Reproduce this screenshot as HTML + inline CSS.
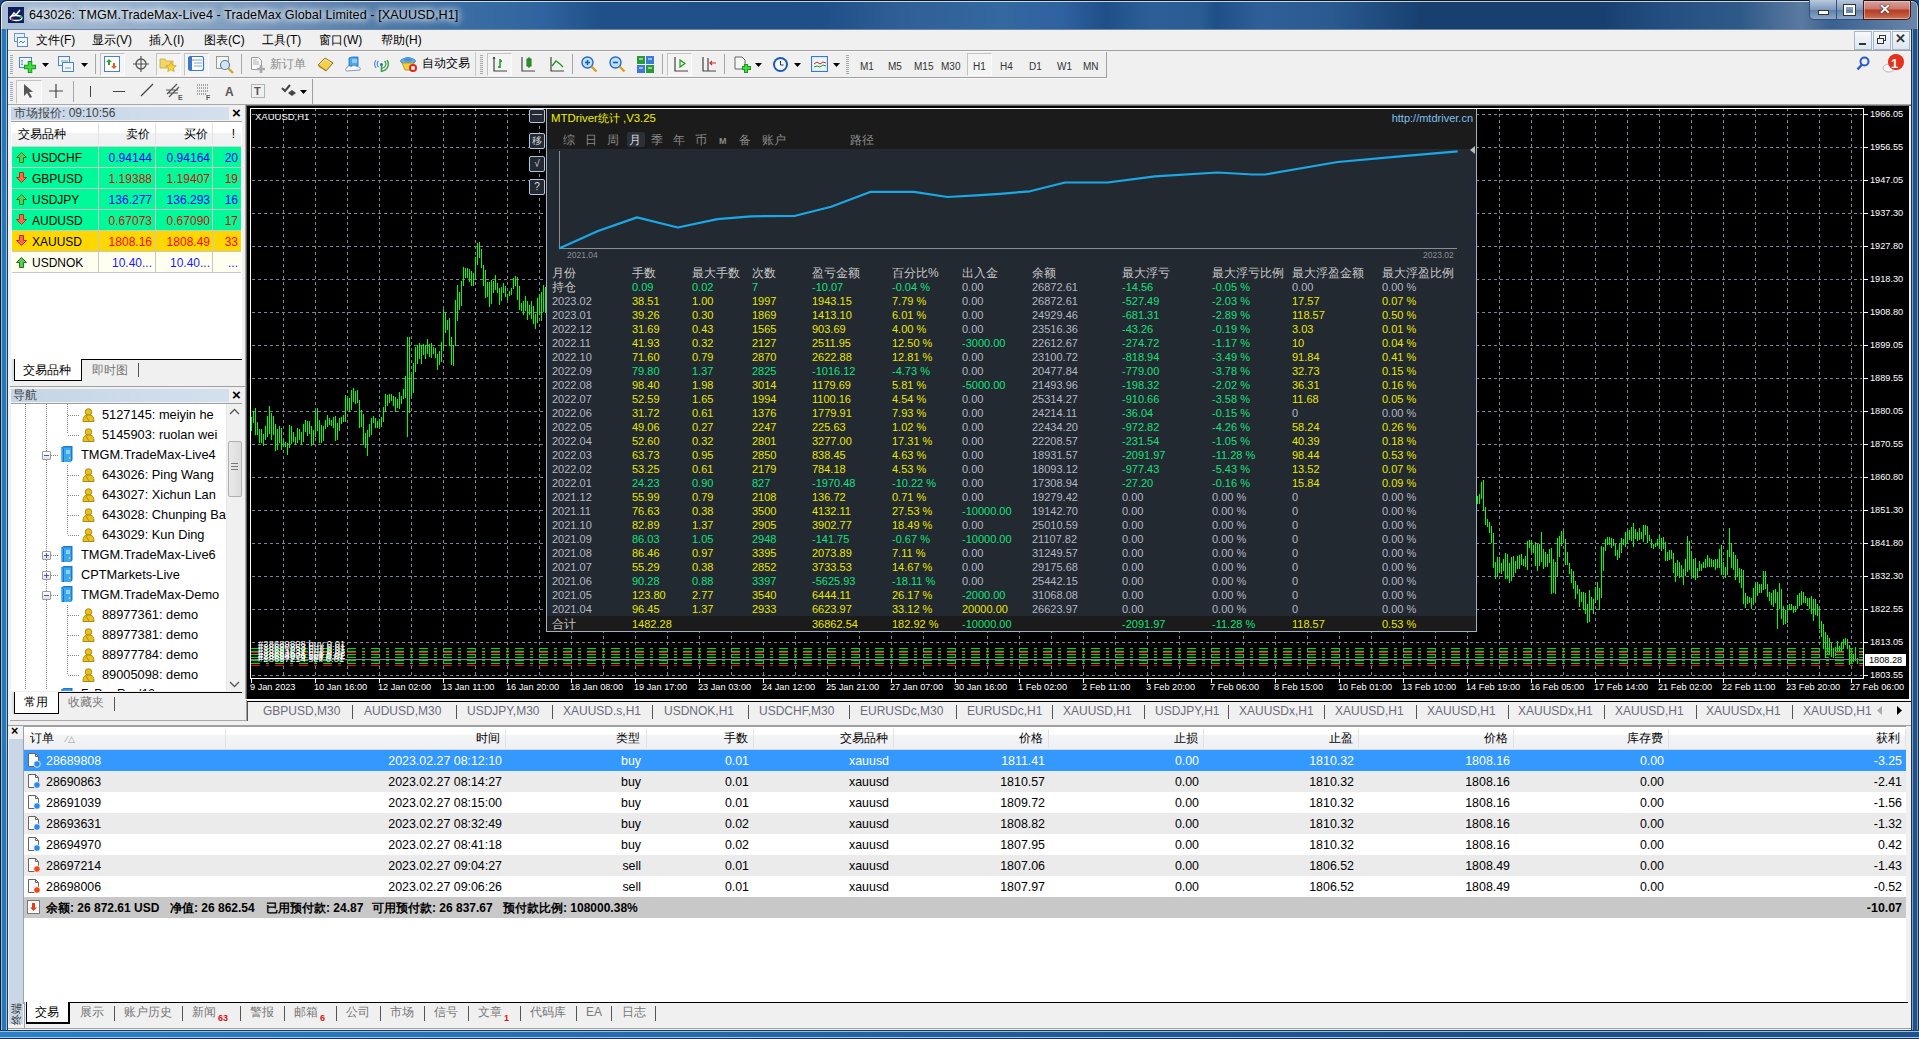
<!DOCTYPE html><html><head><meta charset="utf-8"><style>
html,body{margin:0;padding:0;width:1919px;height:1039px;overflow:hidden;position:relative;font-family:"Liberation Sans",sans-serif;}
div{line-height:16px;white-space:nowrap;}
</style></head><body><div style="position:absolute;left:0px;top:0px;width:1919px;height:1039px;background:linear-gradient(90deg,#3a6ea8 0%,#2f5f96 40%,#2a578c 70%,#3d74ad 100%);"></div><div style="position:absolute;left:0px;top:0px;width:1919px;height:29px;background:linear-gradient(90deg,#a9bdd5 0,#93aecb 150px,#7797bb 260px,#4f7aa8 380px,#2f5f94 500px,#2a5b90 620px,#3a6a9c 680px,#28578c 760px,#2c5d92 900px,#396a9c 1000px,#2a5b90 1100px,#3a6b9e 1220px,#234f84 1300px,#1c467a 1450px,#2a5a8e 1560px,#1d477b 1640px,#2f5d8e 1760px,#44709e 1860px,#3a6592 1919px);"></div><div style="position:absolute;left:0px;top:0px;width:6px;height:6px;background:#1a4f9a;"></div><div style="position:absolute;left:1913px;top:0px;width:6px;height:6px;background:#1a4f9a;"></div><div style="position:absolute;left:0;top:0;width:1917px;height:29px;border:1px solid #0a1a2a;border-bottom:none;border-radius:7px 7px 0 0;box-shadow:inset 1px 1px 0 rgba(255,255,255,.75),inset -1px 0 0 rgba(255,255,255,.6);background:linear-gradient(90deg,#a9bdd5 0,#93aecb 150px,#7797bb 260px,#4f7aa8 380px,#3a6ea4 460px,#2f64a0 540px,#1f5089 600px,#1f4f88 820px,#2f5f96 900px,#3368a0 1000px,#2f62a0 1060px,#1f4f88 1105px,#2c5f98 1150px,#2a5c94 1200px,#1f4f88 1215px,#2f5f98 1260px,#2a5a90 1330px,#17406f 1420px,#17406f 1600px,#244e80 1660px,#2f5a88 1740px,#5a7aa0 1800px,#3a6090 1830px,#6a88aa 1919px);"></div><div style="position:absolute;left:0px;top:29px;width:8px;height:1010px;background:linear-gradient(90deg,#0a1a2a 0 1px,#8ac0e8 1px 2px,#2878b8 2px 6px,#90c0e0 6px 7px,#1a3a5a 7px 8px);"></div><div style="position:absolute;left:1911px;top:29px;width:8px;height:1010px;background:linear-gradient(90deg,#1a3050 0 1px,#80a0c0 1px 2px,#22508a 2px 6px,#7a9ac0 6px 7px,#1a3050 7px 8px);"></div><div style="position:absolute;left:0px;top:1030px;width:1919px;height:9px;background:linear-gradient(180deg,#1a3a5a 0 1px,#90c0e0 1px 2px,transparent 2px 7px,#a0c8e8 7px 8px,#1a3050 8px 9px),linear-gradient(90deg,#2a80c8 0,#2a74b8 400px,#245c98 1000px,#1f4f88 1500px,#22508a 1919px);"></div><div style="position:absolute;left:8px;top:7px;width:16px;height:16px;background:#0c1f5c;"></div><svg style="position:absolute;left:8px;top:7px" width="16" height="16"><ellipse cx="8" cy="11" rx="6" ry="2.5" fill="none" stroke="#fff" stroke-width="1.3"/><path d="M3 10 L6 6 L8 8 L12 3" stroke="#fff" stroke-width="1.5" fill="none"/><circle cx="13" cy="10" r="1.2" fill="#2c2"/><circle cx="4" cy="12" r="1" fill="#e22"/></svg><div style="position:absolute;left:29px;top:7px;font-size:12.6px;color:#000;text-shadow:0 0 6px #fff,0 0 8px #fff,0 0 10px rgba(255,255,255,.8);letter-spacing:0.1px;white-space:nowrap;">643026: TMGM.TradeMax-Live4 - TradeMax Global Limited - [XAUUSD,H1]</div><div style="position:absolute;left:1809px;top:0px;width:27px;height:19px;border:1px solid #34507a;border-top:none;border-radius:0 0 0 5px;background:linear-gradient(180deg,#b9c9dd,#7d99bd 50%,#5e7fa8 51%,#8aa6c8);"></div><div style="position:absolute;left:1818px;top:10px;width:9px;height:3px;background:#fff;border:1px solid #333;"></div><div style="position:absolute;left:1836px;top:0px;width:26px;height:19px;border:1px solid #34507a;border-top:none;background:linear-gradient(180deg,#b9c9dd,#7d99bd 50%,#5e7fa8 51%,#8aa6c8);"></div><div style="position:absolute;left:1844px;top:5px;width:7px;height:6px;border:2px solid #fff;outline:1px solid #333;"></div><div style="position:absolute;left:1863px;top:1px;width:46px;height:18px;border:1px solid #4a1a10;border-top:none;border-radius:0 0 5px 0;box-shadow:inset 0 0 0 1px rgba(255,220,210,.5);background:linear-gradient(180deg,#dda09a 0,#c87870 45%,#b83a20 50%,#c05a40 80%,#c87a60 100%);"></div><div style="position:absolute;left:1879px;top:1px;font-size:14px;color:#fff;font-weight:bold;text-shadow:0 0 1px #000,0 0 2px #333;">✕</div><div style="position:absolute;left:8px;top:29px;width:1903px;height:1001px;background:#f0f0f0;"></div><div style="position:absolute;left:8px;top:29px;width:1903px;height:1px;background:#6d86a6;"></div><svg style="position:absolute;left:13px;top:32px" width="16" height="16"><rect x="1.5" y="1.5" width="10" height="8" fill="#e8f0fa" stroke="#6a9ad0"/><rect x="4.5" y="5.5" width="10" height="9" fill="#f4f8fc" stroke="#5a8ac8"/><path d="M6 11 l2 -2 l2 2 l2 -2" stroke="#4a7abf" fill="none"/></svg><div style="position:absolute;left:36px;top:32px;font-size:12px;color:#000;">文件(F)</div><div style="position:absolute;left:92px;top:32px;font-size:12px;color:#000;">显示(V)</div><div style="position:absolute;left:149px;top:32px;font-size:12px;color:#000;">插入(I)</div><div style="position:absolute;left:204px;top:32px;font-size:12px;color:#000;">图表(C)</div><div style="position:absolute;left:262px;top:32px;font-size:12px;color:#000;">工具(T)</div><div style="position:absolute;left:319px;top:32px;font-size:12px;color:#000;">窗口(W)</div><div style="position:absolute;left:381px;top:32px;font-size:12px;color:#000;">帮助(H)</div><div style="position:absolute;left:1854px;top:31px;width:16px;height:17px;border:1px solid #a8b8cc;background:linear-gradient(#f6f8fb,#dde6f0);"></div><div style="position:absolute;left:1873px;top:31px;width:16px;height:17px;border:1px solid #a8b8cc;background:linear-gradient(#f6f8fb,#dde6f0);"></div><div style="position:absolute;left:1892px;top:31px;width:16px;height:17px;border:1px solid #a8b8cc;background:linear-gradient(#f6f8fb,#dde6f0);"></div><div style="position:absolute;left:1859px;top:43px;width:7px;height:2px;background:#333;"></div><svg style="position:absolute;left:1875px;top:33px" width="14" height="14"><rect x="4.5" y="2.5" width="6" height="5" fill="none" stroke="#333"/><rect x="2.5" y="5.5" width="6" height="5" fill="#eef2f6" stroke="#333"/></svg><div style="position:absolute;left:1895px;top:31px;font-size:13px;color:#333;font-weight:bold;">✕</div><div style="position:absolute;left:8px;top:50px;width:1903px;height:1px;background:#a0a0a0;"></div><div style="position:absolute;left:8px;top:51px;width:1903px;height:1px;background:#fafafa;"></div><div style="position:absolute;left:8px;top:77px;width:1903px;height:1px;background:#a0a0a0;"></div><div style="position:absolute;left:8px;top:78px;width:1903px;height:1px;background:#fafafa;"></div><div style="position:absolute;left:8px;top:104px;width:1903px;height:1px;background:#a8a8a8;"></div><div style="position:absolute;left:246px;top:105px;width:1665px;height:1px;background:#6a6a6a;"></div><div style="position:absolute;left:10px;top:55px;width:3px;height:19px;background:repeating-linear-gradient(180deg,#a8a8a8 0 1px,transparent 1px 2px);"></div><div style="position:absolute;left:10px;top:82px;width:3px;height:19px;background:repeating-linear-gradient(180deg,#a8a8a8 0 1px,transparent 1px 2px);"></div><div style="position:absolute;left:480px;top:55px;width:3px;height:19px;background:repeating-linear-gradient(180deg,#a8a8a8 0 1px,transparent 1px 2px);"></div><div style="position:absolute;left:846px;top:55px;width:3px;height:19px;background:repeating-linear-gradient(180deg,#a8a8a8 0 1px,transparent 1px 2px);"></div><div style="position:absolute;left:475px;top:52px;width:1px;height:24px;background:#c8c8c8;"></div><div style="position:absolute;left:1106px;top:52px;width:1px;height:25px;background:#a0a0a0;"></div><div style="position:absolute;left:312px;top:79px;width:1px;height:25px;background:#a0a0a0;"></div><div style="position:absolute;left:1107px;top:51px;width:804px;height:28px;background:#f0f0f0;"></div><div style="position:absolute;left:313px;top:79px;width:1598px;height:25px;background:#f0f0f0;"></div><svg style="position:absolute;left:19px;top:56px" width="18" height="17" viewBox="0 0 18 17"><rect x="0.5" y="1.5" width="12" height="10" fill="#eef5fc" stroke="#4a84c8"/><path d="M3 4v5M2 5l1-1 1 1M2 8l1 1 1-1" stroke="#6a8ab0" fill="none" stroke-width=".8"/><path d="M11 5v12M5 11h12" stroke="#1a9a1a" stroke-width="4.5"/><path d="M11 6v10M6 11h10" stroke="#3fdc3f" stroke-width="2.5"/></svg><svg style="position:absolute;left:42px;top:63px" width="7" height="4" viewBox="0 0 7 4"><path d="M0 0 H7 L3.5 4 Z" fill="#000"/></svg><svg style="position:absolute;left:58px;top:56px" width="17" height="17" viewBox="0 0 17 17"><rect x="0.5" y="0.5" width="11" height="9" fill="#eef5fc" stroke="#4a84c8"/><rect x="4.5" y="6.5" width="11" height="9" fill="#eef5fc" stroke="#4a84c8"/><path d="M3 5h7M7 12h6" stroke="#6a8ab0" stroke-width=".8"/></svg><svg style="position:absolute;left:81px;top:63px" width="7" height="4" viewBox="0 0 7 4"><path d="M0 0 H7 L3.5 4 Z" fill="#000"/></svg><div style="position:absolute;left:95px;top:54px;width:1px;height:20px;background:#a8a8a8;"></div><div style="position:absolute;left:100px;top:53px;width:23px;height:21px;border:1px solid #c4c4c4;border-right-color:#fbfbfb;border-bottom-color:#fbfbfb;background:#f4f4f4;"></div><svg style="position:absolute;left:104px;top:56px" width="17" height="17" viewBox="0 0 17 17"><rect x="0.5" y="0.5" width="15" height="15" fill="#fff" stroke="#4a84c8"/><path d="M5 3l3 3H6v3H4V6H2z" fill="#2aa52a"/><path d="M10 13l3-3h-2V7H9v3H7z" fill="#e8582a"/></svg><svg style="position:absolute;left:133px;top:56px" width="16" height="16" viewBox="0 0 16 16"><circle cx="8" cy="8" r="5" fill="none" stroke="#555" stroke-width="1.3"/><path d="M8 0v16M0 8h16" stroke="#555" stroke-width="1.2"/></svg><div style="position:absolute;left:156px;top:53px;width:23px;height:21px;border:1px solid #c4c4c4;border-right-color:#fbfbfb;border-bottom-color:#fbfbfb;background:#f4f4f4;"></div><svg style="position:absolute;left:159px;top:55px" width="18" height="18" viewBox="0 0 18 18"><path d="M1 4h5l1 2h7v7H1z" fill="#f2d66a" stroke="#c9a640" stroke-width=".8"/><path d="M12 7l1.6 3.3 3.6.4-2.7 2.4.8 3.5-3.3-1.8-3.3 1.8.8-3.5-2.7-2.4 3.6-.4z" fill="#f5d33b" stroke="#c8a020" stroke-width=".7"/></svg><div style="position:absolute;left:184px;top:53px;width:23px;height:21px;border:1px solid #c4c4c4;border-right-color:#fbfbfb;border-bottom-color:#fbfbfb;background:#f4f4f4;"></div><svg style="position:absolute;left:188px;top:56px" width="17" height="16" viewBox="0 0 17 16"><rect x="0.5" y="0.5" width="15" height="14" rx="2" fill="#fff" stroke="#3a78c8" stroke-width="1.2"/><rect x="1" y="1" width="3" height="13" fill="#3a78c8"/><path d="M6 4h8M6 7h8M6 10h8" stroke="#5a8ad0" stroke-width=".8"/><circle cx="5" cy="4" r=".7" fill="#e22"/></svg><svg style="position:absolute;left:216px;top:56px" width="19" height="18" viewBox="0 0 19 18"><rect x="0.5" y="0.5" width="12" height="12" fill="#f5f5f0" stroke="#9a9a90"/><circle cx="9" cy="9" r="4.5" fill="#cfe6f8" stroke="#5a7aa8" stroke-width="1.2"/><path d="M12 12l5 5" stroke="#d6a020" stroke-width="2.2"/></svg><div style="position:absolute;left:241px;top:54px;width:1px;height:20px;background:#a8a8a8;"></div><svg style="position:absolute;left:250px;top:56px" width="18" height="18" viewBox="0 0 18 18"><path d="M1.5 1.5h7l3 3v9h-10z" fill="#fafafa" stroke="#9a9a9a"/><path d="M3 4h4M3 6h6M3 8h6" stroke="#b0b0b0"/><path d="M11 9v8M7 13h8" stroke="#a8a8a8" stroke-width="2.6"/></svg><div style="position:absolute;left:270px;top:56px;font-size:12px;color:#8a8a8a;">新订单</div><svg style="position:absolute;left:317px;top:57px" width="17" height="15" viewBox="0 0 17 15"><path d="M1 8l7-7 8 5-7 8z" fill="#f2d050" stroke="#8a6010" stroke-width=".9"/><path d="M1 8l1 2 7 4 0-1z" fill="#b07810"/><path d="M3 7l5-5 6 4" fill="none" stroke="#fff2b0" stroke-width=".8"/></svg><svg style="position:absolute;left:345px;top:56px" width="17" height="17" viewBox="0 0 17 17"><path d="M4 2l3-1h6v9H4z" fill="#48a8f0" stroke="#1a6ac0" stroke-width=".8"/><path d="M7 4h5M7 6h5" stroke="#fff" stroke-width=".8"/><path d="M2 15c-2 0-2-3 0-3 0-2 3-3 4-1 1-2 5-2 6 0 2-1 4 1 3 3z" fill="#f4f8fc" stroke="#7a90b0" stroke-width=".9"/></svg><svg style="position:absolute;left:373px;top:56px" width="17" height="17" viewBox="0 0 17 17"><path d="M3 12a7 7 0 0 1 0-8" fill="none" stroke="#5a90d8" stroke-width="1.2"/><path d="M5.5 11a4 4 0 0 1 0-6" fill="none" stroke="#5a90d8" stroke-width="1.2"/><path d="M14 4a7 7 0 0 1-5 11" fill="none" stroke="#3aa04a" stroke-width="1.4"/><path d="M11.5 5a4 4 0 0 1-2.5 7" fill="none" stroke="#3aa04a" stroke-width="1.2"/><circle cx="8.5" cy="8.5" r="1.5" fill="#2a6acc"/><path d="M8.5 9v7" stroke="#3aa04a" stroke-width="1.6"/></svg><svg style="position:absolute;left:400px;top:55px" width="18" height="18" viewBox="0 0 18 18"><ellipse cx="8" cy="6" rx="7.5" ry="3" fill="#68b0e8" stroke="#3a7ab8" stroke-width=".8"/><ellipse cx="8" cy="4.5" rx="4" ry="2.5" fill="#4a98d8"/><path d="M2 8h12l-2 7H5z" fill="#f2d040" stroke="#b08a10" stroke-width=".8"/><circle cx="13" cy="13" r="4" fill="#e0281a"/><rect x="11.3" y="11.3" width="3.4" height="3.4" fill="#fff"/></svg><div style="position:absolute;left:422px;top:55px;font-size:12px;color:#000;">自动交易</div><div style="position:absolute;left:487px;top:53px;width:23px;height:21px;border:1px solid #c4c4c4;border-right-color:#fbfbfb;border-bottom-color:#fbfbfb;background:#f4f4f4;"></div><svg style="position:absolute;left:492px;top:56px" width="16" height="17" viewBox="0 0 16 17"><path d="M2 1v14h13" stroke="#444" fill="none" stroke-width="1.2"/><path d="M1 3l1-2 1 2" stroke="#444" fill="none"/><path d="M8 3v9M6 11h2M8 5h2" stroke="#1a9a1a" stroke-width="1.5" fill="none"/></svg><svg style="position:absolute;left:520px;top:56px" width="16" height="17" viewBox="0 0 16 17"><path d="M2 1v14h13" stroke="#444" fill="none" stroke-width="1.2"/><rect x="7" y="3" width="4" height="7" fill="#2cc02c" stroke="#1a6a1a"/><path d="M9 1v11" stroke="#1a6a1a"/></svg><svg style="position:absolute;left:549px;top:56px" width="16" height="17" viewBox="0 0 16 17"><path d="M2 1v14h13" stroke="#444" fill="none" stroke-width="1.2"/><path d="M3 10l4-5 4 3 3 3" stroke="#1a9a1a" fill="none" stroke-width="1.3"/></svg><div style="position:absolute;left:572px;top:54px;width:1px;height:20px;background:#a8a8a8;"></div><svg style="position:absolute;left:581px;top:56px" width="17" height="17" viewBox="0 0 17 17"><circle cx="6.5" cy="6.5" r="5.5" fill="#bfe0fa" stroke="#2a6ac0" stroke-width="1.4"/><path d="M4 6.5h5M6.5 4v5" stroke="#1a5ab0" stroke-width="1.6"/><path d="M10.5 10.5l5 5" stroke="#d8a020" stroke-width="2.4"/></svg><svg style="position:absolute;left:609px;top:56px" width="17" height="17" viewBox="0 0 17 17"><circle cx="6.5" cy="6.5" r="5.5" fill="#bfe0fa" stroke="#2a6ac0" stroke-width="1.4"/><path d="M4 6.5h5" stroke="#1a5ab0" stroke-width="1.6"/><path d="M10.5 10.5l5 5" stroke="#d8a020" stroke-width="2.4"/></svg><svg style="position:absolute;left:637px;top:56px" width="17" height="17" viewBox="0 0 17 17"><rect x="0" y="0" width="8" height="8" fill="#2a9a3a"/><rect x="9" y="0" width="8" height="8" fill="#3a7ad8"/><rect x="0" y="9" width="8" height="8" fill="#3a7ad8"/><rect x="9" y="9" width="8" height="8" fill="#2a9a3a"/><path d="M2 3h4M11 3h4M2 12h4M11 12h4" stroke="#fff"/></svg><div style="position:absolute;left:662px;top:54px;width:1px;height:20px;background:#a8a8a8;"></div><div style="position:absolute;left:667px;top:53px;width:23px;height:21px;border:1px solid #c4c4c4;border-right-color:#fbfbfb;border-bottom-color:#fbfbfb;background:#f4f4f4;"></div><svg style="position:absolute;left:673px;top:56px" width="16" height="17" viewBox="0 0 16 17"><path d="M2 1v14h13" stroke="#444" fill="none" stroke-width="1.2"/><path d="M7 4v7l5-3.5z" fill="none" stroke="#1a9a1a" stroke-width="1.2"/></svg><svg style="position:absolute;left:701px;top:56px" width="16" height="17" viewBox="0 0 16 17"><path d="M2 1v14h13M7 2v13" stroke="#444" fill="none" stroke-width="1.2"/><path d="M15 7h-6M11 5l-2 2 2 2" stroke="#d02a2a" fill="none" stroke-width="1.2"/></svg><div style="position:absolute;left:724px;top:54px;width:1px;height:20px;background:#a8a8a8;"></div><svg style="position:absolute;left:734px;top:56px" width="18" height="18" viewBox="0 0 18 18"><path d="M1 1h7l3 3v9H1z" fill="#f6f6f6" stroke="#666"/><path d="M12 8v9M8 12h9" stroke="#1a9a1a" stroke-width="4"/><path d="M12 9v7M9 12h7" stroke="#3fdc3f" stroke-width="2"/></svg><svg style="position:absolute;left:755px;top:63px" width="7" height="4" viewBox="0 0 7 4"><path d="M0 0 H7 L3.5 4 Z" fill="#000"/></svg><svg style="position:absolute;left:772px;top:56px" width="17" height="17" viewBox="0 0 17 17"><circle cx="8.5" cy="8.5" r="7.5" fill="#1a5ab8"/><circle cx="8.5" cy="8.5" r="5.5" fill="#f4f8fc"/><path d="M8.5 5v4h3" stroke="#333" fill="none"/></svg><svg style="position:absolute;left:794px;top:63px" width="7" height="4" viewBox="0 0 7 4"><path d="M0 0 H7 L3.5 4 Z" fill="#000"/></svg><svg style="position:absolute;left:811px;top:56px" width="17" height="16" viewBox="0 0 17 16"><rect x="0.5" y="0.5" width="16" height="15" fill="#eaf2fa" stroke="#3a78c8" stroke-width="1.2"/><path d="M3 8l3-2 3 2 3-2 3 1" stroke="#d02a2a" fill="none"/><path d="M3 11l3-1 3 1 3-2 3 1" stroke="#2a9a2a" fill="none"/></svg><svg style="position:absolute;left:833px;top:63px" width="7" height="4" viewBox="0 0 7 4"><path d="M0 0 H7 L3.5 4 Z" fill="#000"/></svg><div style="position:absolute;left:860px;top:59px;font-size:10px;color:#333;">M1</div><div style="position:absolute;left:888px;top:59px;font-size:10px;color:#333;">M5</div><div style="position:absolute;left:914px;top:59px;font-size:10px;color:#333;">M15</div><div style="position:absolute;left:941px;top:59px;font-size:10px;color:#333;">M30</div><div style="position:absolute;left:967px;top:53px;width:23px;height:21px;border:1px solid #c4c4c4;border-right-color:#fbfbfb;border-bottom-color:#fbfbfb;background:#f4f4f4;"></div><div style="position:absolute;left:973px;top:59px;font-size:10px;color:#333;">H1</div><div style="position:absolute;left:1000px;top:59px;font-size:10px;color:#333;">H4</div><div style="position:absolute;left:1029px;top:59px;font-size:10px;color:#333;">D1</div><div style="position:absolute;left:1057px;top:59px;font-size:10px;color:#333;">W1</div><div style="position:absolute;left:1083px;top:59px;font-size:10px;color:#333;">MN</div><svg style="position:absolute;left:1856px;top:56px" width="14" height="16" viewBox="0 0 14 16"><circle cx="8.5" cy="5.5" r="4" fill="none" stroke="#2a5ac8" stroke-width="2"/><path d="M6 8.5l-4.5 5" stroke="#2a5ac8" stroke-width="2.4"/></svg><svg style="position:absolute;left:1880px;top:53px" width="26" height="22" viewBox="0 0 26 22"><ellipse cx="9" cy="15" rx="6" ry="4" fill="#f4f4f4" stroke="#bbb"/><circle cx="16" cy="9" r="8" fill="#e02a1a"/><circle cx="16" cy="9" r="7" fill="#e8321e"/></svg><div style="position:absolute;left:1891px;top:56px;font-size:13px;color:#fff;font-weight:bold;">1</div><div style="position:absolute;left:16px;top:80px;width:24px;height:22px;border:1px solid #c4c4c4;border-right-color:#fbfbfb;border-bottom-color:#fbfbfb;background:#f4f4f4;"></div><svg style="position:absolute;left:23px;top:83px" width="11" height="16" viewBox="0 0 11 16"><path d="M1 1v12l3-3 3 5 2-1-3-5h4z" fill="#555"/></svg><svg style="position:absolute;left:48px;top:83px" width="16" height="16" viewBox="0 0 16 16"><path d="M8 1v14M1 8h14" stroke="#444" stroke-width="1.2"/></svg><div style="position:absolute;left:73px;top:81px;width:1px;height:21px;background:#a8a8a8;"></div><div style="position:absolute;left:90px;top:86px;width:1px;height:11px;background:#444;"></div><div style="position:absolute;left:113px;top:91px;width:12px;height:1px;background:#444;"></div><svg style="position:absolute;left:140px;top:83px" width="14" height="14" viewBox="0 0 14 14"><path d="M1 13L13 1" stroke="#444" stroke-width="1.2"/></svg><svg style="position:absolute;left:166px;top:83px" width="18" height="18" viewBox="0 0 18 18"><path d="M1 11L11 1M3 14L13 4M0 7h12M2 10h10" stroke="#555" stroke-width="1.2"/><text x="12" y="17" font-size="7" font-family="Liberation Sans" fill="#555" font-weight="bold">E</text></svg><svg style="position:absolute;left:196px;top:83px" width="16" height="18" viewBox="0 0 16 18"><path d="M1 2h12M1 5h12M1 8h12M1 11h10" stroke="#555" stroke-dasharray="1 1"/><text x="10" y="17" font-size="7" font-family="Liberation Sans" fill="#555" font-weight="bold">F</text></svg><div style="position:absolute;left:225px;top:84px;font-size:12px;color:#555;font-weight:bold;">A</div><svg style="position:absolute;left:251px;top:83px" width="15" height="16" viewBox="0 0 15 16"><rect x="0.5" y="1.5" width="13" height="13" fill="none" stroke="#777" stroke-dasharray="1 1"/><text x="3" y="12" font-size="11" font-family="Liberation Sans" fill="#555" font-weight="bold">T</text></svg><svg style="position:absolute;left:280px;top:83px" width="18" height="16" viewBox="0 0 18 16"><path d="M2 5l3 3 5-6" stroke="#444" fill="none" stroke-width="2"/><path d="M8 10l4-3 4 3-4 3z" fill="#444"/></svg><svg style="position:absolute;left:300px;top:90px" width="7" height="4" viewBox="0 0 7 4"><path d="M0 0 H7 L3.5 4 Z" fill="#000"/></svg><div style="position:absolute;left:10px;top:106px;width:236px;height:280px;background:#f0f0f0;"></div><div style="position:absolute;left:11px;top:107px;width:218px;height:13px;background:linear-gradient(90deg,#c5d5e6,#d3e0ee);"></div><div style="position:absolute;left:14px;top:105px;font-size:12px;color:#444;">市场报价: 09:10:56</div><div style="position:absolute;left:232px;top:105px;font-size:15px;color:#000;font-weight:bold;">×</div><div style="position:absolute;left:11px;top:121px;width:231px;height:238px;background:#fff;border-top:1px solid #a0a0a0;"></div><div style="position:absolute;left:12px;top:122px;width:229px;height:24px;background:linear-gradient(180deg,#ffffff 0%,#ffffff 45%,#f1f2f4 46%,#eef0f2 100%);border-bottom:1px solid #d0d0d0;"></div><div style="position:absolute;left:98px;top:123px;width:1px;height:21px;background:#e2e2e2;"></div><div style="position:absolute;left:155px;top:123px;width:1px;height:21px;background:#e2e2e2;"></div><div style="position:absolute;left:212px;top:123px;width:1px;height:21px;background:#e2e2e2;"></div><div style="position:absolute;left:18px;top:126px;font-size:12px;color:#000;">交易品种</div><div style="position:absolute;right:1769px;top:126px;font-size:12px;color:#000;text-align:right;">卖价</div><div style="position:absolute;right:1711px;top:126px;font-size:12px;color:#000;text-align:right;">买价</div><div style="position:absolute;right:1684px;top:126px;font-size:12px;color:#000;text-align:right;">!</div><div style="position:absolute;left:12px;top:147px;width:229px;height:20px;background:#00fa9a;"></div><div style="position:absolute;left:12px;top:167px;width:229px;height:1px;background:#c8c8c8;"></div><div style="position:absolute;left:98px;top:147px;width:1px;height:20px;background:#c8c8c8;"></div><div style="position:absolute;left:155px;top:147px;width:1px;height:20px;background:#c8c8c8;"></div><div style="position:absolute;left:212px;top:147px;width:1px;height:20px;background:#c8c8c8;"></div><svg style="position:absolute;left:16px;top:152px" width="11" height="11" viewBox="0 0 11 11"><path d="M5.5 0.5L10.5 5.5H7.5V10.5H3.5V5.5H0.5Z" fill="#5ac85a" stroke="#1a7a1a" stroke-width="1"/></svg><div style="position:absolute;left:32px;top:150px;font-size:12px;color:#000;">USDCHF</div><div style="position:absolute;right:1767px;top:150px;font-size:12px;color:#0000ff;text-align:right;">0.94144</div><div style="position:absolute;right:1709px;top:150px;font-size:12px;color:#0000ff;text-align:right;">0.94164</div><div style="position:absolute;right:1681px;top:150px;font-size:12px;color:#0000ff;text-align:right;">20</div><div style="position:absolute;left:12px;top:168px;width:229px;height:20px;background:#00fa9a;"></div><div style="position:absolute;left:12px;top:188px;width:229px;height:1px;background:#c8c8c8;"></div><div style="position:absolute;left:98px;top:168px;width:1px;height:20px;background:#c8c8c8;"></div><div style="position:absolute;left:155px;top:168px;width:1px;height:20px;background:#c8c8c8;"></div><div style="position:absolute;left:212px;top:168px;width:1px;height:20px;background:#c8c8c8;"></div><svg style="position:absolute;left:16px;top:172px" width="11" height="11" viewBox="0 0 11 11"><path d="M5.5 10.5L10.5 5.5H7.5V0.5H3.5V5.5H0.5Z" fill="#f86a4a" stroke="#c02a10" stroke-width="1"/></svg><div style="position:absolute;left:32px;top:171px;font-size:12px;color:#000;">GBPUSD</div><div style="position:absolute;right:1767px;top:171px;font-size:12px;color:#dd0a0a;text-align:right;">1.19388</div><div style="position:absolute;right:1709px;top:171px;font-size:12px;color:#dd0a0a;text-align:right;">1.19407</div><div style="position:absolute;right:1681px;top:171px;font-size:12px;color:#dd0a0a;text-align:right;">19</div><div style="position:absolute;left:12px;top:189px;width:229px;height:20px;background:#00fa9a;"></div><div style="position:absolute;left:12px;top:209px;width:229px;height:1px;background:#c8c8c8;"></div><div style="position:absolute;left:98px;top:189px;width:1px;height:20px;background:#c8c8c8;"></div><div style="position:absolute;left:155px;top:189px;width:1px;height:20px;background:#c8c8c8;"></div><div style="position:absolute;left:212px;top:189px;width:1px;height:20px;background:#c8c8c8;"></div><svg style="position:absolute;left:16px;top:194px" width="11" height="11" viewBox="0 0 11 11"><path d="M5.5 0.5L10.5 5.5H7.5V10.5H3.5V5.5H0.5Z" fill="#5ac85a" stroke="#1a7a1a" stroke-width="1"/></svg><div style="position:absolute;left:32px;top:192px;font-size:12px;color:#000;">USDJPY</div><div style="position:absolute;right:1767px;top:192px;font-size:12px;color:#0000ff;text-align:right;">136.277</div><div style="position:absolute;right:1709px;top:192px;font-size:12px;color:#0000ff;text-align:right;">136.293</div><div style="position:absolute;right:1681px;top:192px;font-size:12px;color:#0000ff;text-align:right;">16</div><div style="position:absolute;left:12px;top:210px;width:229px;height:20px;background:#00fa9a;"></div><div style="position:absolute;left:12px;top:230px;width:229px;height:1px;background:#c8c8c8;"></div><div style="position:absolute;left:98px;top:210px;width:1px;height:20px;background:#c8c8c8;"></div><div style="position:absolute;left:155px;top:210px;width:1px;height:20px;background:#c8c8c8;"></div><div style="position:absolute;left:212px;top:210px;width:1px;height:20px;background:#c8c8c8;"></div><svg style="position:absolute;left:16px;top:214px" width="11" height="11" viewBox="0 0 11 11"><path d="M5.5 10.5L10.5 5.5H7.5V0.5H3.5V5.5H0.5Z" fill="#f86a4a" stroke="#c02a10" stroke-width="1"/></svg><div style="position:absolute;left:32px;top:213px;font-size:12px;color:#000;">AUDUSD</div><div style="position:absolute;right:1767px;top:213px;font-size:12px;color:#dd0a0a;text-align:right;">0.67073</div><div style="position:absolute;right:1709px;top:213px;font-size:12px;color:#dd0a0a;text-align:right;">0.67090</div><div style="position:absolute;right:1681px;top:213px;font-size:12px;color:#dd0a0a;text-align:right;">17</div><div style="position:absolute;left:12px;top:231px;width:229px;height:20px;background:#ffd700;"></div><div style="position:absolute;left:12px;top:251px;width:229px;height:1px;background:#c8c8c8;"></div><div style="position:absolute;left:98px;top:231px;width:1px;height:20px;background:#c8c8c8;"></div><div style="position:absolute;left:155px;top:231px;width:1px;height:20px;background:#c8c8c8;"></div><div style="position:absolute;left:212px;top:231px;width:1px;height:20px;background:#c8c8c8;"></div><svg style="position:absolute;left:16px;top:235px" width="11" height="11" viewBox="0 0 11 11"><path d="M5.5 10.5L10.5 5.5H7.5V0.5H3.5V5.5H0.5Z" fill="#f86a4a" stroke="#c02a10" stroke-width="1"/></svg><div style="position:absolute;left:32px;top:234px;font-size:12px;color:#000;">XAUUSD</div><div style="position:absolute;right:1767px;top:234px;font-size:12px;color:#ff0000;text-align:right;">1808.16</div><div style="position:absolute;right:1709px;top:234px;font-size:12px;color:#ff0000;text-align:right;">1808.49</div><div style="position:absolute;right:1681px;top:234px;font-size:12px;color:#ff0000;text-align:right;">33</div><div style="position:absolute;left:12px;top:252px;width:229px;height:20px;background:#fffff0;"></div><div style="position:absolute;left:12px;top:272px;width:229px;height:1px;background:#c8c8c8;"></div><div style="position:absolute;left:98px;top:252px;width:1px;height:20px;background:#c8c8c8;"></div><div style="position:absolute;left:155px;top:252px;width:1px;height:20px;background:#c8c8c8;"></div><div style="position:absolute;left:212px;top:252px;width:1px;height:20px;background:#c8c8c8;"></div><svg style="position:absolute;left:16px;top:257px" width="11" height="11" viewBox="0 0 11 11"><path d="M5.5 0.5L10.5 5.5H7.5V10.5H3.5V5.5H0.5Z" fill="#5ac85a" stroke="#1a7a1a" stroke-width="1"/></svg><div style="position:absolute;left:32px;top:255px;font-size:12px;color:#000;">USDNOK</div><div style="position:absolute;right:1767px;top:255px;font-size:12px;color:#1a1aff;text-align:right;">10.40...</div><div style="position:absolute;right:1709px;top:255px;font-size:12px;color:#1a1aff;text-align:right;">10.40...</div><div style="position:absolute;right:1681px;top:255px;font-size:12px;color:#1a1aff;text-align:right;">...</div><div style="position:absolute;left:11px;top:359px;width:231px;height:23px;background:#f0f0f0;"></div><div style="position:absolute;left:81px;top:359px;width:161px;height:1px;background:#000;"></div><div style="position:absolute;left:14px;top:359px;width:66px;height:21px;background:#fff;border:1px solid #000;border-top:none;"></div><div style="position:absolute;left:12px;top:359px;width:2px;height:23px;background:#e0e0e0;"></div><div style="position:absolute;left:23px;top:362px;font-size:12px;color:#000;">交易品种</div><div style="position:absolute;left:92px;top:362px;font-size:12px;color:#777;">即时图</div><div style="position:absolute;left:138px;top:363px;width:1px;height:14px;background:#555;"></div><div style="position:absolute;left:10px;top:386px;width:236px;height:1px;background:#a0a0a0;"></div><div style="position:absolute;left:10px;top:387px;width:236px;height:330px;background:#f0f0f0;"></div><div style="position:absolute;left:11px;top:389px;width:218px;height:13px;background:linear-gradient(90deg,#c5d5e6,#d3e0ee);"></div><div style="position:absolute;left:13px;top:387px;font-size:12px;color:#444;">导航</div><div style="position:absolute;left:232px;top:387px;font-size:15px;color:#000;font-weight:bold;">×</div><div style="position:absolute;left:11px;top:403px;width:231px;height:288px;background:#fff;border-top:1px solid #a0a0a0;overflow:hidden;"></div><div style="position:absolute;left:25px;top:404px;width:1px;height:286px;background:repeating-linear-gradient(180deg,#888 0 1px,transparent 1px 2px);"></div><div style="position:absolute;left:46px;top:404px;width:1px;height:50px;background:repeating-linear-gradient(180deg,#888 0 1px,transparent 1px 2px);"></div><div style="position:absolute;left:46px;top:454px;width:1px;height:236px;background:repeating-linear-gradient(180deg,#888 0 1px,transparent 1px 2px);"></div><div style="position:absolute;left:67px;top:404px;width:1px;height:30px;background:repeating-linear-gradient(180deg,#888 0 1px,transparent 1px 2px);"></div><div style="position:absolute;left:67px;top:465px;width:1px;height:70px;background:repeating-linear-gradient(180deg,#888 0 1px,transparent 1px 2px);"></div><div style="position:absolute;left:67px;top:605px;width:1px;height:70px;background:repeating-linear-gradient(180deg,#888 0 1px,transparent 1px 2px);"></div><div style="position:absolute;left:68px;top:415px;width:11px;height:1px;background:repeating-linear-gradient(90deg,#888 0 1px,transparent 1px 2px);"></div><svg style="position:absolute;left:82px;top:408px" width="13" height="14" viewBox="0 0 13 14"><circle cx="6.5" cy="4" r="3.3" fill="#e8c020" stroke="#a88000" stroke-width=".9"/><path d="M1 13.5c0-5 1.5-6.5 5.5-6.5s5.5 1.5 5.5 6.5z" fill="#e8c020" stroke="#a88000" stroke-width=".9"/><path d="M4 8l3 5" stroke="#a88000" stroke-width=".8"/></svg><div style="position:absolute;left:102px;top:407px;font-size:12.8px;color:#000;white-space:nowrap;">5127145: meiyin he</div><div style="position:absolute;left:68px;top:435px;width:11px;height:1px;background:repeating-linear-gradient(90deg,#888 0 1px,transparent 1px 2px);"></div><svg style="position:absolute;left:82px;top:428px" width="13" height="14" viewBox="0 0 13 14"><circle cx="6.5" cy="4" r="3.3" fill="#e8c020" stroke="#a88000" stroke-width=".9"/><path d="M1 13.5c0-5 1.5-6.5 5.5-6.5s5.5 1.5 5.5 6.5z" fill="#e8c020" stroke="#a88000" stroke-width=".9"/><path d="M4 8l3 5" stroke="#a88000" stroke-width=".8"/></svg><div style="position:absolute;left:102px;top:427px;font-size:12.8px;color:#000;white-space:nowrap;">5145903: ruolan wei</div><div style="position:absolute;left:51px;top:455px;width:7px;height:1px;background:repeating-linear-gradient(90deg,#888 0 1px,transparent 1px 2px);"></div><div style="position:absolute;left:42px;top:451px;width:7px;height:7px;border:1px solid #9a9a9a;border-radius:1px;background:linear-gradient(180deg,#fff,#e0e0e0);"></div><div style="position:absolute;left:44px;top:455px;width:5px;height:1px;background:#3a5ab0;"></div><svg style="position:absolute;left:61px;top:446px" width="12" height="16" viewBox="0 0 12 16"><path d="M0.5 1.5l2-1.5h9v14l-1.5 2H0.5z" fill="#1a7ad8"/><path d="M0.5 1.5h9.5v14.5H2.5l-2-2z" fill="#38a8f0"/><path d="M0.5 1.5l2 1.5v13" stroke="#1a6ac0" fill="none" stroke-width=".8"/><path d="M5 5h4M5 7h4" stroke="#e8f6ff" stroke-width="1"/><circle cx="8.5" cy="12" r=".9" fill="#f0d020"/></svg><div style="position:absolute;left:81px;top:447px;font-size:12.8px;color:#000;white-space:nowrap;">TMGM.TradeMax-Live4</div><div style="position:absolute;left:68px;top:475px;width:11px;height:1px;background:repeating-linear-gradient(90deg,#888 0 1px,transparent 1px 2px);"></div><svg style="position:absolute;left:82px;top:468px" width="13" height="14" viewBox="0 0 13 14"><circle cx="6.5" cy="4" r="3.3" fill="#e8c020" stroke="#a88000" stroke-width=".9"/><path d="M1 13.5c0-5 1.5-6.5 5.5-6.5s5.5 1.5 5.5 6.5z" fill="#e8c020" stroke="#a88000" stroke-width=".9"/><path d="M4 8l3 5" stroke="#a88000" stroke-width=".8"/></svg><div style="position:absolute;left:102px;top:467px;font-size:12.8px;color:#000;white-space:nowrap;">643026: Ping Wang</div><div style="position:absolute;left:68px;top:495px;width:11px;height:1px;background:repeating-linear-gradient(90deg,#888 0 1px,transparent 1px 2px);"></div><svg style="position:absolute;left:82px;top:488px" width="13" height="14" viewBox="0 0 13 14"><circle cx="6.5" cy="4" r="3.3" fill="#e8c020" stroke="#a88000" stroke-width=".9"/><path d="M1 13.5c0-5 1.5-6.5 5.5-6.5s5.5 1.5 5.5 6.5z" fill="#e8c020" stroke="#a88000" stroke-width=".9"/><path d="M4 8l3 5" stroke="#a88000" stroke-width=".8"/></svg><div style="position:absolute;left:102px;top:487px;font-size:12.8px;color:#000;white-space:nowrap;">643027: Xichun Lan</div><div style="position:absolute;left:68px;top:515px;width:11px;height:1px;background:repeating-linear-gradient(90deg,#888 0 1px,transparent 1px 2px);"></div><svg style="position:absolute;left:82px;top:508px" width="13" height="14" viewBox="0 0 13 14"><circle cx="6.5" cy="4" r="3.3" fill="#e8c020" stroke="#a88000" stroke-width=".9"/><path d="M1 13.5c0-5 1.5-6.5 5.5-6.5s5.5 1.5 5.5 6.5z" fill="#e8c020" stroke="#a88000" stroke-width=".9"/><path d="M4 8l3 5" stroke="#a88000" stroke-width=".8"/></svg><div style="position:absolute;left:102px;top:507px;font-size:12.8px;color:#000;white-space:nowrap;">643028: Chunping Ba</div><div style="position:absolute;left:68px;top:535px;width:11px;height:1px;background:repeating-linear-gradient(90deg,#888 0 1px,transparent 1px 2px);"></div><svg style="position:absolute;left:82px;top:528px" width="13" height="14" viewBox="0 0 13 14"><circle cx="6.5" cy="4" r="3.3" fill="#e8c020" stroke="#a88000" stroke-width=".9"/><path d="M1 13.5c0-5 1.5-6.5 5.5-6.5s5.5 1.5 5.5 6.5z" fill="#e8c020" stroke="#a88000" stroke-width=".9"/><path d="M4 8l3 5" stroke="#a88000" stroke-width=".8"/></svg><div style="position:absolute;left:102px;top:527px;font-size:12.8px;color:#000;white-space:nowrap;">643029: Kun Ding</div><div style="position:absolute;left:51px;top:555px;width:7px;height:1px;background:repeating-linear-gradient(90deg,#888 0 1px,transparent 1px 2px);"></div><div style="position:absolute;left:42px;top:551px;width:7px;height:7px;border:1px solid #9a9a9a;border-radius:1px;background:linear-gradient(180deg,#fff,#e0e0e0);"></div><div style="position:absolute;left:44px;top:555px;width:5px;height:1px;background:#3a5ab0;"></div><div style="position:absolute;left:46px;top:553px;width:1px;height:5px;background:#3a5ab0;"></div><svg style="position:absolute;left:61px;top:546px" width="12" height="16" viewBox="0 0 12 16"><path d="M0.5 1.5l2-1.5h9v14l-1.5 2H0.5z" fill="#1a7ad8"/><path d="M0.5 1.5h9.5v14.5H2.5l-2-2z" fill="#38a8f0"/><path d="M0.5 1.5l2 1.5v13" stroke="#1a6ac0" fill="none" stroke-width=".8"/><path d="M5 5h4M5 7h4" stroke="#e8f6ff" stroke-width="1"/><circle cx="8.5" cy="12" r=".9" fill="#f0d020"/></svg><div style="position:absolute;left:81px;top:547px;font-size:12.8px;color:#000;white-space:nowrap;">TMGM.TradeMax-Live6</div><div style="position:absolute;left:51px;top:575px;width:7px;height:1px;background:repeating-linear-gradient(90deg,#888 0 1px,transparent 1px 2px);"></div><div style="position:absolute;left:42px;top:571px;width:7px;height:7px;border:1px solid #9a9a9a;border-radius:1px;background:linear-gradient(180deg,#fff,#e0e0e0);"></div><div style="position:absolute;left:44px;top:575px;width:5px;height:1px;background:#3a5ab0;"></div><div style="position:absolute;left:46px;top:573px;width:1px;height:5px;background:#3a5ab0;"></div><svg style="position:absolute;left:61px;top:566px" width="12" height="16" viewBox="0 0 12 16"><path d="M0.5 1.5l2-1.5h9v14l-1.5 2H0.5z" fill="#1a7ad8"/><path d="M0.5 1.5h9.5v14.5H2.5l-2-2z" fill="#38a8f0"/><path d="M0.5 1.5l2 1.5v13" stroke="#1a6ac0" fill="none" stroke-width=".8"/><path d="M5 5h4M5 7h4" stroke="#e8f6ff" stroke-width="1"/><circle cx="8.5" cy="12" r=".9" fill="#f0d020"/></svg><div style="position:absolute;left:81px;top:567px;font-size:12.8px;color:#000;white-space:nowrap;">CPTMarkets-Live</div><div style="position:absolute;left:51px;top:595px;width:7px;height:1px;background:repeating-linear-gradient(90deg,#888 0 1px,transparent 1px 2px);"></div><div style="position:absolute;left:42px;top:591px;width:7px;height:7px;border:1px solid #9a9a9a;border-radius:1px;background:linear-gradient(180deg,#fff,#e0e0e0);"></div><div style="position:absolute;left:44px;top:595px;width:5px;height:1px;background:#3a5ab0;"></div><svg style="position:absolute;left:61px;top:586px" width="12" height="16" viewBox="0 0 12 16"><path d="M0.5 1.5l2-1.5h9v14l-1.5 2H0.5z" fill="#1a7ad8"/><path d="M0.5 1.5h9.5v14.5H2.5l-2-2z" fill="#38a8f0"/><path d="M0.5 1.5l2 1.5v13" stroke="#1a6ac0" fill="none" stroke-width=".8"/><path d="M5 5h4M5 7h4" stroke="#e8f6ff" stroke-width="1"/><circle cx="8.5" cy="12" r=".9" fill="#f0d020"/></svg><div style="position:absolute;left:81px;top:587px;font-size:12.8px;color:#000;white-space:nowrap;">TMGM.TradeMax-Demo</div><div style="position:absolute;left:68px;top:615px;width:11px;height:1px;background:repeating-linear-gradient(90deg,#888 0 1px,transparent 1px 2px);"></div><svg style="position:absolute;left:82px;top:608px" width="13" height="14" viewBox="0 0 13 14"><circle cx="6.5" cy="4" r="3.3" fill="#e8c020" stroke="#a88000" stroke-width=".9"/><path d="M1 13.5c0-5 1.5-6.5 5.5-6.5s5.5 1.5 5.5 6.5z" fill="#e8c020" stroke="#a88000" stroke-width=".9"/><path d="M4 8l3 5" stroke="#a88000" stroke-width=".8"/></svg><div style="position:absolute;left:102px;top:607px;font-size:12.8px;color:#000;white-space:nowrap;">88977361: demo</div><div style="position:absolute;left:68px;top:635px;width:11px;height:1px;background:repeating-linear-gradient(90deg,#888 0 1px,transparent 1px 2px);"></div><svg style="position:absolute;left:82px;top:628px" width="13" height="14" viewBox="0 0 13 14"><circle cx="6.5" cy="4" r="3.3" fill="#e8c020" stroke="#a88000" stroke-width=".9"/><path d="M1 13.5c0-5 1.5-6.5 5.5-6.5s5.5 1.5 5.5 6.5z" fill="#e8c020" stroke="#a88000" stroke-width=".9"/><path d="M4 8l3 5" stroke="#a88000" stroke-width=".8"/></svg><div style="position:absolute;left:102px;top:627px;font-size:12.8px;color:#000;white-space:nowrap;">88977381: demo</div><div style="position:absolute;left:68px;top:655px;width:11px;height:1px;background:repeating-linear-gradient(90deg,#888 0 1px,transparent 1px 2px);"></div><svg style="position:absolute;left:82px;top:648px" width="13" height="14" viewBox="0 0 13 14"><circle cx="6.5" cy="4" r="3.3" fill="#e8c020" stroke="#a88000" stroke-width=".9"/><path d="M1 13.5c0-5 1.5-6.5 5.5-6.5s5.5 1.5 5.5 6.5z" fill="#e8c020" stroke="#a88000" stroke-width=".9"/><path d="M4 8l3 5" stroke="#a88000" stroke-width=".8"/></svg><div style="position:absolute;left:102px;top:647px;font-size:12.8px;color:#000;white-space:nowrap;">88977784: demo</div><div style="position:absolute;left:68px;top:675px;width:11px;height:1px;background:repeating-linear-gradient(90deg,#888 0 1px,transparent 1px 2px);"></div><svg style="position:absolute;left:82px;top:668px" width="13" height="14" viewBox="0 0 13 14"><circle cx="6.5" cy="4" r="3.3" fill="#e8c020" stroke="#a88000" stroke-width=".9"/><path d="M1 13.5c0-5 1.5-6.5 5.5-6.5s5.5 1.5 5.5 6.5z" fill="#e8c020" stroke="#a88000" stroke-width=".9"/><path d="M4 8l3 5" stroke="#a88000" stroke-width=".8"/></svg><div style="position:absolute;left:102px;top:667px;font-size:12.8px;color:#000;white-space:nowrap;">89005098: demo</div><div style="position:absolute;left:11px;top:684px;width:215px;height:7px;overflow:hidden;"><svg style="position:absolute;left:50px;top:4px" width="12" height="16" viewBox="0 0 12 16"><path d="M0.5 1.5l2-1.5h9v14l-1.5 2H0.5z" fill="#1a7ad8"/><path d="M0.5 1.5h9.5v14.5H2.5l-2-2z" fill="#38a8f0"/><path d="M0.5 1.5l2 1.5v13" stroke="#1a6ac0" fill="none" stroke-width=".8"/><path d="M5 5h4M5 7h4" stroke="#e8f6ff" stroke-width="1"/><circle cx="8.5" cy="12" r=".9" fill="#f0d020"/></svg><div style="position:absolute;left:70px;top:2px;font-size:12px;">FxPro-Real12</div></div><div style="position:absolute;left:226px;top:404px;width:16px;height:287px;background:#f0f0f0;border-left:1px solid #e8e8e8;"></div><svg style="position:absolute;left:229px;top:408px" width="11" height="8" viewBox="0 0 11 8"><path d="M1 6l4.5-4.5L10 6" stroke="#555" fill="none" stroke-width="1.3"/></svg><svg style="position:absolute;left:229px;top:680px" width="11" height="8" viewBox="0 0 11 8"><path d="M1 2l4.5 4.5L10 2" stroke="#555" fill="none" stroke-width="1.3"/></svg><div style="position:absolute;left:228px;top:441px;width:12px;height:54px;background:linear-gradient(90deg,#eaeaea,#dcdcdc);border:1px solid #b0b0b0;border-radius:2px;"></div><div style="position:absolute;left:231px;top:463px;width:7px;height:1px;background:#777;"></div><div style="position:absolute;left:231px;top:466px;width:7px;height:1px;background:#777;"></div><div style="position:absolute;left:231px;top:469px;width:7px;height:1px;background:#777;"></div><div style="position:absolute;left:11px;top:691px;width:231px;height:24px;background:#f0f0f0;"></div><div style="position:absolute;left:57px;top:692px;width:185px;height:1px;background:#000;"></div><div style="position:absolute;left:14px;top:692px;width:43px;height:21px;background:#fff;border:1px solid #000;border-top:none;"></div><div style="position:absolute;left:12px;top:692px;width:2px;height:22px;background:#e0e0e0;"></div><div style="position:absolute;left:24px;top:694px;font-size:12px;color:#000;">常用</div><div style="position:absolute;left:68px;top:694px;font-size:12px;color:#777;">收藏夹</div><div style="position:absolute;left:114px;top:697px;width:1px;height:14px;background:#555;"></div><div style="position:absolute;left:10px;top:720px;width:237px;height:1px;background:#a0a0a0;"></div><div style="position:absolute;left:246px;top:690px;width:1px;height:31px;background:#a0a0a0;"></div><svg style="position:absolute;left:248px;top:106px" width="1661" height="593" viewBox="248 106 1661 593" shape-rendering="crispEdges"><rect x="248" y="106" width="1661" height="593" fill="#000"/><path d="M252 114.5H1862M252 147.5H1862M252 180.5H1862M252 213.5H1862M252 246.5H1862M252 279.5H1862M252 312.5H1862M252 345.5H1862M252 378.5H1862M252 411.5H1862M252 444.5H1862M252 477.5H1862M252 510.5H1862M252 543.5H1862M252 576.5H1862M252 609.5H1862M252 642.5H1862M252 675.5H1862M283.5 108V678M315.5 108V678M347.5 108V678M379.5 108V678M411.5 108V678M443.5 108V678M475.5 108V678M507.5 108V678M539.5 108V678M571.5 108V678M603.5 108V678M635.5 108V678M667.5 108V678M699.5 108V678M731.5 108V678M763.5 108V678M795.5 108V678M827.5 108V678M859.5 108V678M891.5 108V678M923.5 108V678M955.5 108V678M987.5 108V678M1019.5 108V678M1051.5 108V678M1083.5 108V678M1115.5 108V678M1147.5 108V678M1179.5 108V678M1211.5 108V678M1243.5 108V678M1275.5 108V678M1307.5 108V678M1339.5 108V678M1371.5 108V678M1403.5 108V678M1435.5 108V678M1467.5 108V678M1499.5 108V678M1531.5 108V678M1563.5 108V678M1595.5 108V678M1627.5 108V678M1659.5 108V678M1691.5 108V678M1723.5 108V678M1755.5 108V678M1787.5 108V678M1819.5 108V678M1851.5 108V678" stroke="#778899" stroke-width="1" stroke-dasharray="3 3" fill="none"/><path d="M251.5 417V431M253.5 411V423M255.5 408V435M257.5 422V435M259.5 429V443M261.5 429V443M263.5 434V446M265.5 426V440M267.5 416V437M269.5 406V434M271.5 413V440M273.5 416V435M275.5 424V451M277.5 429V450M279.5 426V443M281.5 428V450M283.5 439V447M285.5 442V447M287.5 443V455M289.5 425V448M291.5 426V444M293.5 432V442M295.5 437V445M297.5 428V443M299.5 429V440M301.5 432V445M303.5 424V442M305.5 420V432M307.5 421V436M309.5 421V434M311.5 426V446M313.5 430V444M315.5 411V437M317.5 408V431M319.5 420V443M321.5 425V443M323.5 426V441M325.5 420V429M327.5 415V427M329.5 418V425M331.5 420V426M333.5 417V428M335.5 416V441M337.5 423V440M339.5 418V431M341.5 417V424M343.5 415V422M345.5 395V422M347.5 397V410M349.5 398V412M351.5 390V410M353.5 388V402M355.5 391V404M357.5 390V403M359.5 400V428M361.5 410V427M363.5 414V445M365.5 433V448M367.5 430V456M369.5 424V437M371.5 418V435M373.5 416V423M375.5 418V428M377.5 421V428M379.5 419V427M381.5 417V427M383.5 407V422M385.5 394V412M387.5 395V406M389.5 394V403M391.5 394V401M393.5 396V406M395.5 397V412M397.5 399V408M399.5 392V409M401.5 396V404M403.5 389V399M405.5 376V398M407.5 337V437M409.5 337V413M411.5 374V397M413.5 363V393M415.5 347V372M417.5 345V364M419.5 343V359M421.5 345V364M423.5 344V355M425.5 345V359M427.5 339V354M429.5 344V357M431.5 343V358M433.5 347V354M435.5 348V358M437.5 354V370M439.5 351V365M441.5 342V362M443.5 309V351M445.5 312V333M447.5 320V330M449.5 318V346M451.5 337V365M453.5 345V366M455.5 300V346M457.5 285V321M459.5 292V310M461.5 281V306M463.5 267V286M465.5 268V278M467.5 268V278M469.5 269V282M471.5 271V286M473.5 273V286M475.5 257V280M477.5 243V265M479.5 242V258M481.5 249V268M483.5 265V286M485.5 270V298M487.5 282V297M489.5 282V307M491.5 280V304M493.5 281V293M495.5 275V290M497.5 283V293M499.5 288V305M501.5 287V301M503.5 283V293M505.5 286V297M507.5 294V300M509.5 291V296M511.5 288V295M513.5 278V289M515.5 276V286M517.5 277V300M519.5 286V310M521.5 303V311M523.5 301V315M525.5 296V311M527.5 301V320M529.5 305V315M531.5 301V319M533.5 306V324M535.5 314V329M537.5 298V323M539.5 294V315M541.5 292V321M543.5 285V312M545.5 287V313M547.5 296V310M1477.5 496V504M1479.5 494V504M1481.5 482V499M1483.5 480V510M1485.5 507V525M1487.5 519V527M1489.5 522V533M1491.5 526V543M1493.5 533V568M1495.5 562V579M1497.5 557V577M1499.5 557V573M1501.5 563V574M1503.5 559V571M1505.5 553V579M1507.5 554V579M1509.5 563V583M1511.5 557V581M1513.5 556V577M1515.5 561V573M1517.5 556V569M1519.5 555V569M1521.5 554V565M1523.5 559V566M1525.5 556V567M1527.5 541V570M1529.5 540V548M1531.5 540V553M1533.5 545V553M1535.5 542V566M1537.5 544V571M1539.5 544V566M1541.5 532V562M1543.5 549V569M1545.5 552V567M1547.5 554V567M1549.5 549V563M1551.5 548V594M1553.5 559V593M1555.5 562V594M1557.5 538V577M1559.5 536V557M1561.5 531V546M1563.5 531V543M1565.5 539V565M1567.5 552V565M1569.5 563V574M1571.5 569V583M1573.5 571V589M1575.5 581V599M1577.5 585V594M1579.5 589V607M1581.5 592V602M1583.5 592V610M1585.5 593V614M1587.5 604V623M1589.5 590V622M1591.5 597V610M1593.5 599V614M1595.5 587V603M1597.5 582V600M1599.5 588V610M1601.5 546V598M1603.5 547V571M1605.5 539V551M1607.5 537V545M1609.5 537V545M1611.5 538V548M1613.5 539V546M1615.5 544V556M1617.5 550V560M1619.5 543V558M1621.5 538V553M1623.5 539V545M1625.5 532V547M1627.5 531V544M1629.5 530V540M1631.5 527V541M1633.5 523V547M1635.5 529V539M1637.5 532V541M1639.5 528V540M1641.5 532V539M1643.5 525V542M1645.5 525V535M1647.5 526V543M1649.5 535V541M1651.5 539V548M1653.5 544V549M1655.5 543V547M1657.5 539V546M1659.5 535V549M1661.5 538V551M1663.5 537V549M1665.5 542V561M1667.5 552V561M1669.5 550V560M1671.5 550V559M1673.5 553V573M1675.5 563V582M1677.5 560V576M1679.5 562V578M1681.5 565V577M1683.5 569V585M1685.5 559V576M1687.5 536V572M1689.5 541V570M1691.5 551V576M1693.5 559V578M1695.5 558V580M1697.5 568V578M1699.5 561V571M1701.5 564V571M1703.5 562V568M1705.5 559V568M1707.5 555V567M1709.5 558V567M1711.5 559V567M1713.5 560V567M1715.5 559V570M1717.5 559V568M1719.5 549V568M1721.5 545V575M1723.5 562V575M1725.5 567V578M1727.5 550V575M1729.5 528V557M1731.5 543V568M1733.5 552V570M1735.5 555V580M1737.5 559V577M1739.5 568V583M1741.5 569V588M1743.5 570V604M1745.5 593V608M1747.5 596V604M1749.5 597V603M1751.5 598V609M1753.5 588V605M1755.5 583V602M1757.5 582V596M1759.5 584V593M1761.5 584V593M1763.5 571V590M1765.5 571V589M1767.5 584V597M1769.5 592V601M1771.5 593V605M1773.5 590V607M1775.5 589V603M1777.5 592V629M1779.5 583V609M1781.5 589V619M1783.5 606V625M1785.5 610V624M1787.5 605V623M1789.5 604V610M1791.5 604V610M1793.5 606V613M1795.5 606V612M1797.5 595V609M1799.5 593V606M1801.5 591V605M1803.5 592V603M1805.5 596V603M1807.5 598V606M1809.5 598V609M1811.5 596V614M1813.5 599V621M1815.5 599V615M1817.5 604V616M1819.5 607V629M1821.5 621V637M1823.5 624V649M1825.5 632V658M1827.5 635V655M1829.5 638V655M1831.5 643V657M1833.5 648V658M1835.5 647V656M1837.5 641V651M1839.5 646V652M1841.5 642V651M1843.5 639V648M1845.5 638V645M1847.5 639V649M1849.5 645V665M1851.5 649V664M1853.5 654V662M1855.5 647V661M1857.5 658V664" stroke="#00ff00" stroke-width="1" fill="none"/><path d="M251 648.5H1863M251 651.5H1863M251 654.5H1863M251 657.5H1863M251 660.5H1863M251 663.5H1863" stroke="#00e000" stroke-width="1" stroke-dasharray="9 6 3 6" stroke-dashoffset="24" fill="none"/><path d="M251 652.5H1863M251 665.5H1863" stroke="#ff0000" stroke-width="1" stroke-dasharray="9 6 3 6" stroke-dashoffset="24" fill="none"/><path d="M251 659.5H1863" stroke="#778899" stroke-width="1" fill="none"/><path d="M250.5 678.5V108.5H1863.5V678.5H250.5" stroke="#fff" stroke-width="1" fill="none"/><path d="M1864 114.5H1868M1864 147.5H1868M1864 180.5H1868M1864 213.5H1868M1864 246.5H1868M1864 279.5H1868M1864 312.5H1868M1864 345.5H1868M1864 378.5H1868M1864 411.5H1868M1864 444.5H1868M1864 477.5H1868M1864 510.5H1868M1864 543.5H1868M1864 576.5H1868M1864 609.5H1868M1864 642.5H1868M1864 675.5H1868" stroke="#fff" stroke-width="1"/><path d="M251.5 679V683M315.5 679V683M379.5 679V683M443.5 679V683M507.5 679V683M571.5 679V683M635.5 679V683M699.5 679V683M763.5 679V683M827.5 679V683M891.5 679V683M955.5 679V683M1019.5 679V683M1083.5 679V683M1147.5 679V683M1211.5 679V683M1275.5 679V683M1339.5 679V683M1403.5 679V683M1467.5 679V683M1531.5 679V683M1595.5 679V683M1659.5 679V683M1723.5 679V683M1787.5 679V683M1851.5 679V683" stroke="#fff" stroke-width="1"/></svg><div style="position:absolute;left:245px;top:105px;width:1px;height:594px;background:#a8a8a8;"></div><div style="position:absolute;left:246px;top:105px;width:1px;height:594px;background:#5a5a5a;"></div><div style="position:absolute;left:247px;top:106px;width:1px;height:593px;background:#000;"></div><div style="position:absolute;left:1870px;top:108px;font-size:9.2px;color:#fff;line-height:12px;">1966.05</div><div style="position:absolute;left:1870px;top:141px;font-size:9.2px;color:#fff;line-height:12px;">1956.55</div><div style="position:absolute;left:1870px;top:174px;font-size:9.2px;color:#fff;line-height:12px;">1947.05</div><div style="position:absolute;left:1870px;top:207px;font-size:9.2px;color:#fff;line-height:12px;">1937.30</div><div style="position:absolute;left:1870px;top:240px;font-size:9.2px;color:#fff;line-height:12px;">1927.80</div><div style="position:absolute;left:1870px;top:273px;font-size:9.2px;color:#fff;line-height:12px;">1918.30</div><div style="position:absolute;left:1870px;top:306px;font-size:9.2px;color:#fff;line-height:12px;">1908.80</div><div style="position:absolute;left:1870px;top:339px;font-size:9.2px;color:#fff;line-height:12px;">1899.05</div><div style="position:absolute;left:1870px;top:372px;font-size:9.2px;color:#fff;line-height:12px;">1889.55</div><div style="position:absolute;left:1870px;top:405px;font-size:9.2px;color:#fff;line-height:12px;">1880.05</div><div style="position:absolute;left:1870px;top:438px;font-size:9.2px;color:#fff;line-height:12px;">1870.55</div><div style="position:absolute;left:1870px;top:471px;font-size:9.2px;color:#fff;line-height:12px;">1860.80</div><div style="position:absolute;left:1870px;top:504px;font-size:9.2px;color:#fff;line-height:12px;">1851.30</div><div style="position:absolute;left:1870px;top:537px;font-size:9.2px;color:#fff;line-height:12px;">1841.80</div><div style="position:absolute;left:1870px;top:570px;font-size:9.2px;color:#fff;line-height:12px;">1832.30</div><div style="position:absolute;left:1870px;top:603px;font-size:9.2px;color:#fff;line-height:12px;">1822.55</div><div style="position:absolute;left:1870px;top:636px;font-size:9.2px;color:#fff;line-height:12px;">1813.05</div><div style="position:absolute;left:1870px;top:669px;font-size:9.2px;color:#fff;line-height:12px;">1803.55</div><div style="position:absolute;left:1865px;top:654px;width:41px;height:12px;background:#fff;"></div><div style="position:absolute;left:1869px;top:654px;font-size:9.2px;color:#000;line-height:12px;">1808.28</div><div style="position:absolute;left:250px;top:681px;font-size:9.2px;color:#fff;line-height:12px;white-space:nowrap;">9 Jan 2023</div><div style="position:absolute;left:314px;top:681px;font-size:9.2px;color:#fff;line-height:12px;white-space:nowrap;">10 Jan 16:00</div><div style="position:absolute;left:378px;top:681px;font-size:9.2px;color:#fff;line-height:12px;white-space:nowrap;">12 Jan 02:00</div><div style="position:absolute;left:442px;top:681px;font-size:9.2px;color:#fff;line-height:12px;white-space:nowrap;">13 Jan 11:00</div><div style="position:absolute;left:506px;top:681px;font-size:9.2px;color:#fff;line-height:12px;white-space:nowrap;">16 Jan 20:00</div><div style="position:absolute;left:570px;top:681px;font-size:9.2px;color:#fff;line-height:12px;white-space:nowrap;">18 Jan 08:00</div><div style="position:absolute;left:634px;top:681px;font-size:9.2px;color:#fff;line-height:12px;white-space:nowrap;">19 Jan 17:00</div><div style="position:absolute;left:698px;top:681px;font-size:9.2px;color:#fff;line-height:12px;white-space:nowrap;">23 Jan 03:00</div><div style="position:absolute;left:762px;top:681px;font-size:9.2px;color:#fff;line-height:12px;white-space:nowrap;">24 Jan 12:00</div><div style="position:absolute;left:826px;top:681px;font-size:9.2px;color:#fff;line-height:12px;white-space:nowrap;">25 Jan 21:00</div><div style="position:absolute;left:890px;top:681px;font-size:9.2px;color:#fff;line-height:12px;white-space:nowrap;">27 Jan 07:00</div><div style="position:absolute;left:954px;top:681px;font-size:9.2px;color:#fff;line-height:12px;white-space:nowrap;">30 Jan 16:00</div><div style="position:absolute;left:1018px;top:681px;font-size:9.2px;color:#fff;line-height:12px;white-space:nowrap;">1 Feb 02:00</div><div style="position:absolute;left:1082px;top:681px;font-size:9.2px;color:#fff;line-height:12px;white-space:nowrap;">2 Feb 11:00</div><div style="position:absolute;left:1146px;top:681px;font-size:9.2px;color:#fff;line-height:12px;white-space:nowrap;">3 Feb 20:00</div><div style="position:absolute;left:1210px;top:681px;font-size:9.2px;color:#fff;line-height:12px;white-space:nowrap;">7 Feb 06:00</div><div style="position:absolute;left:1274px;top:681px;font-size:9.2px;color:#fff;line-height:12px;white-space:nowrap;">8 Feb 15:00</div><div style="position:absolute;left:1338px;top:681px;font-size:9.2px;color:#fff;line-height:12px;white-space:nowrap;">10 Feb 01:00</div><div style="position:absolute;left:1402px;top:681px;font-size:9.2px;color:#fff;line-height:12px;white-space:nowrap;">13 Feb 10:00</div><div style="position:absolute;left:1466px;top:681px;font-size:9.2px;color:#fff;line-height:12px;white-space:nowrap;">14 Feb 19:00</div><div style="position:absolute;left:1530px;top:681px;font-size:9.2px;color:#fff;line-height:12px;white-space:nowrap;">16 Feb 05:00</div><div style="position:absolute;left:1594px;top:681px;font-size:9.2px;color:#fff;line-height:12px;white-space:nowrap;">17 Feb 14:00</div><div style="position:absolute;left:1658px;top:681px;font-size:9.2px;color:#fff;line-height:12px;white-space:nowrap;">21 Feb 02:00</div><div style="position:absolute;left:1722px;top:681px;font-size:9.2px;color:#fff;line-height:12px;white-space:nowrap;">22 Feb 11:00</div><div style="position:absolute;left:1786px;top:681px;font-size:9.2px;color:#fff;line-height:12px;white-space:nowrap;">23 Feb 20:00</div><div style="position:absolute;left:1850px;top:681px;font-size:9.2px;color:#fff;line-height:12px;white-space:nowrap;">27 Feb 06:00</div><div style="position:absolute;left:255px;top:111px;font-size:9.5px;color:#fff;line-height:12px;">XAUUSD,H1</div><div style="position:absolute;left:258px;top:638px;font-size:9.4px;color:#fff;line-height:12px;white-space:nowrap;letter-spacing:0.1px;">#28689808 buy 0.01</div><div style="position:absolute;left:258px;top:641px;font-size:9.4px;color:#fff;line-height:12px;white-space:nowrap;letter-spacing:0.1px;">#28690863 buy 0.01</div><div style="position:absolute;left:258px;top:644px;font-size:9.4px;color:#fff;line-height:12px;white-space:nowrap;letter-spacing:0.1px;">#28691039 buy 0.01</div><div style="position:absolute;left:258px;top:647px;font-size:9.4px;color:#fff;line-height:12px;white-space:nowrap;letter-spacing:0.1px;">#28693631 buy 0.02</div><div style="position:absolute;left:258px;top:650px;font-size:9.4px;color:#fff;line-height:12px;white-space:nowrap;letter-spacing:0.1px;">#28694970 buy 0.02</div><div style="position:absolute;left:258px;top:653px;font-size:9.4px;color:#fff;line-height:12px;white-space:nowrap;letter-spacing:0.1px;">#28697214 sell 0.01</div><div style="position:absolute;left:258px;top:650px;font-size:9.4px;color:#fff;line-height:12px;white-space:nowrap;letter-spacing:0.1px;">#28698006 sell 0.01</div><div style="position:absolute;left:529px;top:109px;width:14px;height:12px;border:1px solid #b0c4de;border-radius:2px;background:#232a33;color:#ddd;font-size:10px;line-height:8px;text-align:center;overflow:hidden;">—</div><div style="position:absolute;left:529px;top:133px;width:14px;height:14px;border:1px solid #b0c4de;border-radius:2px;background:#232a33;color:#ddd;font-size:10px;line-height:14px;text-align:center;overflow:hidden;">移</div><div style="position:absolute;left:529px;top:156px;width:14px;height:14px;border:1px solid #b0c4de;border-radius:2px;background:#232a33;color:#ddd;font-size:10px;line-height:14px;text-align:center;overflow:hidden;">√</div><div style="position:absolute;left:529px;top:179px;width:14px;height:14px;border:1px solid #b0c4de;border-radius:2px;background:#232a33;color:#ddd;font-size:10px;line-height:14px;text-align:center;overflow:hidden;">?</div><div style="position:absolute;left:546px;top:109px;width:931px;height:523px;background:#232931;"></div><div style="position:absolute;left:546px;top:109px;width:1px;height:523px;background:#9fb2c8;"></div><div style="position:absolute;left:1476px;top:109px;width:1px;height:523px;background:#9fb2c8;"></div><div style="position:absolute;left:546px;top:631px;width:931px;height:1px;background:#9fb2c8;"></div><div style="position:absolute;left:547px;top:109px;width:929px;height:40px;background:#1b1b1b;"></div><div style="position:absolute;left:551px;top:110px;font-size:11.4px;color:#f0f000;line-height:16px;white-space:nowrap;">MTDriver统计 ,V3.25</div><div style="position:absolute;right:446px;top:110px;font-size:11px;color:#7ec0ee;text-align:right;line-height:16px;">http://mtdriver.cn</div><div style="position:absolute;left:627px;top:132px;width:18px;height:15px;background:#2a3039;border-radius:2px;"></div><div style="position:absolute;left:563px;top:133px;font-size:12px;color:#8a8a8a;line-height:15px;white-space:nowrap;">综</div><div style="position:absolute;left:585px;top:133px;font-size:12px;color:#8a8a8a;line-height:15px;white-space:nowrap;">日</div><div style="position:absolute;left:607px;top:133px;font-size:12px;color:#8a8a8a;line-height:15px;white-space:nowrap;">周</div><div style="position:absolute;left:629px;top:133px;font-size:12px;color:#d8d8d8;line-height:15px;white-space:nowrap;">月</div><div style="position:absolute;left:651px;top:133px;font-size:12px;color:#8a8a8a;line-height:15px;white-space:nowrap;">季</div><div style="position:absolute;left:673px;top:133px;font-size:12px;color:#8a8a8a;line-height:15px;white-space:nowrap;">年</div><div style="position:absolute;left:695px;top:133px;font-size:12px;color:#8a8a8a;line-height:15px;white-space:nowrap;">币</div><div style="position:absolute;left:719px;top:134px;font-size:9px;color:#8a8a8a;line-height:15px;white-space:nowrap;font-weight:bold;">M</div><div style="position:absolute;left:739px;top:133px;font-size:12px;color:#8a8a8a;line-height:15px;white-space:nowrap;">备</div><div style="position:absolute;left:762px;top:133px;font-size:12px;color:#8a8a8a;line-height:15px;white-space:nowrap;">账户</div><div style="position:absolute;left:850px;top:133px;font-size:12px;color:#8a8a8a;line-height:15px;white-space:nowrap;">路径</div><svg style="position:absolute;left:546px;top:108px" width="931" height="160"><path d="M13.5 43V141M13 140.5H911" stroke="#8a8e94" stroke-width="1" fill="none"/><path d="M13.0 140.6 L52.0 123.0 L91.0 109.4 L131.8 119.5 L171.4 111.1 L205.0 108.3 L249.3 107.8 L285.2 98.7 L324.8 83.8 L367.9 83.8 L401.5 89.0 L430.2 87.4 L454.0 85.8 L484.0 83.3 L519.0 74.5 L561.6 74.5 L609.0 68.3 L671.6 64.5 L706.6 66.5 L719.0 66.5 L791.7 54.0 L854.0 48.3 L911.7 43.3" stroke="#1aa8e6" stroke-width="2.2" fill="none" stroke-linejoin="round"/><path d="M924 42l5 -4v8z" fill="#bbb"/></svg><div style="position:absolute;left:567px;top:250px;font-size:8.5px;color:#8a8e94;line-height:10px;">2021.04</div><div style="position:absolute;left:1423px;top:250px;font-size:8.5px;color:#8a8e94;line-height:10px;">2023.02</div><div style="position:absolute;left:552px;top:266px;font-size:12px;color:#c8c8c8;line-height:15px;white-space:nowrap;">月份</div><div style="position:absolute;left:632px;top:266px;font-size:12px;color:#c8c8c8;line-height:15px;white-space:nowrap;">手数</div><div style="position:absolute;left:692px;top:266px;font-size:12px;color:#c8c8c8;line-height:15px;white-space:nowrap;">最大手数</div><div style="position:absolute;left:752px;top:266px;font-size:12px;color:#c8c8c8;line-height:15px;white-space:nowrap;">次数</div><div style="position:absolute;left:812px;top:266px;font-size:12px;color:#c8c8c8;line-height:15px;white-space:nowrap;">盈亏金额</div><div style="position:absolute;left:892px;top:266px;font-size:12px;color:#c8c8c8;line-height:15px;white-space:nowrap;">百分比%</div><div style="position:absolute;left:962px;top:266px;font-size:12px;color:#c8c8c8;line-height:15px;white-space:nowrap;">出入金</div><div style="position:absolute;left:1032px;top:266px;font-size:12px;color:#c8c8c8;line-height:15px;white-space:nowrap;">余额</div><div style="position:absolute;left:1122px;top:266px;font-size:12px;color:#c8c8c8;line-height:15px;white-space:nowrap;">最大浮亏</div><div style="position:absolute;left:1212px;top:266px;font-size:12px;color:#c8c8c8;line-height:15px;white-space:nowrap;">最大浮亏比例</div><div style="position:absolute;left:1292px;top:266px;font-size:12px;color:#c8c8c8;line-height:15px;white-space:nowrap;">最大浮盈金额</div><div style="position:absolute;left:1382px;top:266px;font-size:12px;color:#c8c8c8;line-height:15px;white-space:nowrap;">最大浮盈比例</div><div style="position:absolute;left:552px;top:280px;font-size:12px;color:#c8c8c8;line-height:14px;white-space:nowrap;">持仓</div><div style="position:absolute;left:632px;top:280px;font-size:11px;color:#14e07a;line-height:14px;white-space:nowrap;">0.09</div><div style="position:absolute;left:692px;top:280px;font-size:11px;color:#14e07a;line-height:14px;white-space:nowrap;">0.02</div><div style="position:absolute;left:752px;top:280px;font-size:11px;color:#14e07a;line-height:14px;white-space:nowrap;">7</div><div style="position:absolute;left:812px;top:280px;font-size:11px;color:#14e07a;line-height:14px;white-space:nowrap;">-10.07</div><div style="position:absolute;left:892px;top:280px;font-size:11px;color:#14e07a;line-height:14px;white-space:nowrap;">-0.04 %</div><div style="position:absolute;left:962px;top:280px;font-size:11px;color:#b4b8c4;line-height:14px;white-space:nowrap;">0.00</div><div style="position:absolute;left:1032px;top:280px;font-size:11px;color:#b4b8c4;line-height:14px;white-space:nowrap;">26872.61</div><div style="position:absolute;left:1122px;top:280px;font-size:11px;color:#14e07a;line-height:14px;white-space:nowrap;">-14.56</div><div style="position:absolute;left:1212px;top:280px;font-size:11px;color:#14e07a;line-height:14px;white-space:nowrap;">-0.05 %</div><div style="position:absolute;left:1292px;top:280px;font-size:11px;color:#b4b8c4;line-height:14px;white-space:nowrap;">0.00</div><div style="position:absolute;left:1382px;top:280px;font-size:11px;color:#b4b8c4;line-height:14px;white-space:nowrap;">0.00 %</div><div style="position:absolute;left:552px;top:294px;font-size:11px;color:#b4b8c4;line-height:14px;white-space:nowrap;">2023.02</div><div style="position:absolute;left:632px;top:294px;font-size:11px;color:#e6e600;line-height:14px;white-space:nowrap;">38.51</div><div style="position:absolute;left:692px;top:294px;font-size:11px;color:#e6e600;line-height:14px;white-space:nowrap;">1.00</div><div style="position:absolute;left:752px;top:294px;font-size:11px;color:#e6e600;line-height:14px;white-space:nowrap;">1997</div><div style="position:absolute;left:812px;top:294px;font-size:11px;color:#e6e600;line-height:14px;white-space:nowrap;">1943.15</div><div style="position:absolute;left:892px;top:294px;font-size:11px;color:#e6e600;line-height:14px;white-space:nowrap;">7.79 %</div><div style="position:absolute;left:962px;top:294px;font-size:11px;color:#b4b8c4;line-height:14px;white-space:nowrap;">0.00</div><div style="position:absolute;left:1032px;top:294px;font-size:11px;color:#b4b8c4;line-height:14px;white-space:nowrap;">26872.61</div><div style="position:absolute;left:1122px;top:294px;font-size:11px;color:#14e07a;line-height:14px;white-space:nowrap;">-527.49</div><div style="position:absolute;left:1212px;top:294px;font-size:11px;color:#14e07a;line-height:14px;white-space:nowrap;">-2.03 %</div><div style="position:absolute;left:1292px;top:294px;font-size:11px;color:#e6e600;line-height:14px;white-space:nowrap;">17.57</div><div style="position:absolute;left:1382px;top:294px;font-size:11px;color:#e6e600;line-height:14px;white-space:nowrap;">0.07 %</div><div style="position:absolute;left:552px;top:308px;font-size:11px;color:#b4b8c4;line-height:14px;white-space:nowrap;">2023.01</div><div style="position:absolute;left:632px;top:308px;font-size:11px;color:#e6e600;line-height:14px;white-space:nowrap;">39.26</div><div style="position:absolute;left:692px;top:308px;font-size:11px;color:#e6e600;line-height:14px;white-space:nowrap;">0.30</div><div style="position:absolute;left:752px;top:308px;font-size:11px;color:#e6e600;line-height:14px;white-space:nowrap;">1869</div><div style="position:absolute;left:812px;top:308px;font-size:11px;color:#e6e600;line-height:14px;white-space:nowrap;">1413.10</div><div style="position:absolute;left:892px;top:308px;font-size:11px;color:#e6e600;line-height:14px;white-space:nowrap;">6.01 %</div><div style="position:absolute;left:962px;top:308px;font-size:11px;color:#b4b8c4;line-height:14px;white-space:nowrap;">0.00</div><div style="position:absolute;left:1032px;top:308px;font-size:11px;color:#b4b8c4;line-height:14px;white-space:nowrap;">24929.46</div><div style="position:absolute;left:1122px;top:308px;font-size:11px;color:#14e07a;line-height:14px;white-space:nowrap;">-681.31</div><div style="position:absolute;left:1212px;top:308px;font-size:11px;color:#14e07a;line-height:14px;white-space:nowrap;">-2.89 %</div><div style="position:absolute;left:1292px;top:308px;font-size:11px;color:#e6e600;line-height:14px;white-space:nowrap;">118.57</div><div style="position:absolute;left:1382px;top:308px;font-size:11px;color:#e6e600;line-height:14px;white-space:nowrap;">0.50 %</div><div style="position:absolute;left:552px;top:322px;font-size:11px;color:#b4b8c4;line-height:14px;white-space:nowrap;">2022.12</div><div style="position:absolute;left:632px;top:322px;font-size:11px;color:#e6e600;line-height:14px;white-space:nowrap;">31.69</div><div style="position:absolute;left:692px;top:322px;font-size:11px;color:#e6e600;line-height:14px;white-space:nowrap;">0.43</div><div style="position:absolute;left:752px;top:322px;font-size:11px;color:#e6e600;line-height:14px;white-space:nowrap;">1565</div><div style="position:absolute;left:812px;top:322px;font-size:11px;color:#e6e600;line-height:14px;white-space:nowrap;">903.69</div><div style="position:absolute;left:892px;top:322px;font-size:11px;color:#e6e600;line-height:14px;white-space:nowrap;">4.00 %</div><div style="position:absolute;left:962px;top:322px;font-size:11px;color:#b4b8c4;line-height:14px;white-space:nowrap;">0.00</div><div style="position:absolute;left:1032px;top:322px;font-size:11px;color:#b4b8c4;line-height:14px;white-space:nowrap;">23516.36</div><div style="position:absolute;left:1122px;top:322px;font-size:11px;color:#14e07a;line-height:14px;white-space:nowrap;">-43.26</div><div style="position:absolute;left:1212px;top:322px;font-size:11px;color:#14e07a;line-height:14px;white-space:nowrap;">-0.19 %</div><div style="position:absolute;left:1292px;top:322px;font-size:11px;color:#e6e600;line-height:14px;white-space:nowrap;">3.03</div><div style="position:absolute;left:1382px;top:322px;font-size:11px;color:#e6e600;line-height:14px;white-space:nowrap;">0.01 %</div><div style="position:absolute;left:552px;top:336px;font-size:11px;color:#b4b8c4;line-height:14px;white-space:nowrap;">2022.11</div><div style="position:absolute;left:632px;top:336px;font-size:11px;color:#e6e600;line-height:14px;white-space:nowrap;">41.93</div><div style="position:absolute;left:692px;top:336px;font-size:11px;color:#e6e600;line-height:14px;white-space:nowrap;">0.32</div><div style="position:absolute;left:752px;top:336px;font-size:11px;color:#e6e600;line-height:14px;white-space:nowrap;">2127</div><div style="position:absolute;left:812px;top:336px;font-size:11px;color:#e6e600;line-height:14px;white-space:nowrap;">2511.95</div><div style="position:absolute;left:892px;top:336px;font-size:11px;color:#e6e600;line-height:14px;white-space:nowrap;">12.50 %</div><div style="position:absolute;left:962px;top:336px;font-size:11px;color:#14e07a;line-height:14px;white-space:nowrap;">-3000.00</div><div style="position:absolute;left:1032px;top:336px;font-size:11px;color:#b4b8c4;line-height:14px;white-space:nowrap;">22612.67</div><div style="position:absolute;left:1122px;top:336px;font-size:11px;color:#14e07a;line-height:14px;white-space:nowrap;">-274.72</div><div style="position:absolute;left:1212px;top:336px;font-size:11px;color:#14e07a;line-height:14px;white-space:nowrap;">-1.17 %</div><div style="position:absolute;left:1292px;top:336px;font-size:11px;color:#e6e600;line-height:14px;white-space:nowrap;">10</div><div style="position:absolute;left:1382px;top:336px;font-size:11px;color:#e6e600;line-height:14px;white-space:nowrap;">0.04 %</div><div style="position:absolute;left:552px;top:350px;font-size:11px;color:#b4b8c4;line-height:14px;white-space:nowrap;">2022.10</div><div style="position:absolute;left:632px;top:350px;font-size:11px;color:#e6e600;line-height:14px;white-space:nowrap;">71.60</div><div style="position:absolute;left:692px;top:350px;font-size:11px;color:#e6e600;line-height:14px;white-space:nowrap;">0.79</div><div style="position:absolute;left:752px;top:350px;font-size:11px;color:#e6e600;line-height:14px;white-space:nowrap;">2870</div><div style="position:absolute;left:812px;top:350px;font-size:11px;color:#e6e600;line-height:14px;white-space:nowrap;">2622.88</div><div style="position:absolute;left:892px;top:350px;font-size:11px;color:#e6e600;line-height:14px;white-space:nowrap;">12.81 %</div><div style="position:absolute;left:962px;top:350px;font-size:11px;color:#b4b8c4;line-height:14px;white-space:nowrap;">0.00</div><div style="position:absolute;left:1032px;top:350px;font-size:11px;color:#b4b8c4;line-height:14px;white-space:nowrap;">23100.72</div><div style="position:absolute;left:1122px;top:350px;font-size:11px;color:#14e07a;line-height:14px;white-space:nowrap;">-818.94</div><div style="position:absolute;left:1212px;top:350px;font-size:11px;color:#14e07a;line-height:14px;white-space:nowrap;">-3.49 %</div><div style="position:absolute;left:1292px;top:350px;font-size:11px;color:#e6e600;line-height:14px;white-space:nowrap;">91.84</div><div style="position:absolute;left:1382px;top:350px;font-size:11px;color:#e6e600;line-height:14px;white-space:nowrap;">0.41 %</div><div style="position:absolute;left:552px;top:364px;font-size:11px;color:#b4b8c4;line-height:14px;white-space:nowrap;">2022.09</div><div style="position:absolute;left:632px;top:364px;font-size:11px;color:#14e07a;line-height:14px;white-space:nowrap;">79.80</div><div style="position:absolute;left:692px;top:364px;font-size:11px;color:#14e07a;line-height:14px;white-space:nowrap;">1.37</div><div style="position:absolute;left:752px;top:364px;font-size:11px;color:#14e07a;line-height:14px;white-space:nowrap;">2825</div><div style="position:absolute;left:812px;top:364px;font-size:11px;color:#14e07a;line-height:14px;white-space:nowrap;">-1016.12</div><div style="position:absolute;left:892px;top:364px;font-size:11px;color:#14e07a;line-height:14px;white-space:nowrap;">-4.73 %</div><div style="position:absolute;left:962px;top:364px;font-size:11px;color:#b4b8c4;line-height:14px;white-space:nowrap;">0.00</div><div style="position:absolute;left:1032px;top:364px;font-size:11px;color:#b4b8c4;line-height:14px;white-space:nowrap;">20477.84</div><div style="position:absolute;left:1122px;top:364px;font-size:11px;color:#14e07a;line-height:14px;white-space:nowrap;">-779.00</div><div style="position:absolute;left:1212px;top:364px;font-size:11px;color:#14e07a;line-height:14px;white-space:nowrap;">-3.78 %</div><div style="position:absolute;left:1292px;top:364px;font-size:11px;color:#e6e600;line-height:14px;white-space:nowrap;">32.73</div><div style="position:absolute;left:1382px;top:364px;font-size:11px;color:#e6e600;line-height:14px;white-space:nowrap;">0.15 %</div><div style="position:absolute;left:552px;top:378px;font-size:11px;color:#b4b8c4;line-height:14px;white-space:nowrap;">2022.08</div><div style="position:absolute;left:632px;top:378px;font-size:11px;color:#e6e600;line-height:14px;white-space:nowrap;">98.40</div><div style="position:absolute;left:692px;top:378px;font-size:11px;color:#e6e600;line-height:14px;white-space:nowrap;">1.98</div><div style="position:absolute;left:752px;top:378px;font-size:11px;color:#e6e600;line-height:14px;white-space:nowrap;">3014</div><div style="position:absolute;left:812px;top:378px;font-size:11px;color:#e6e600;line-height:14px;white-space:nowrap;">1179.69</div><div style="position:absolute;left:892px;top:378px;font-size:11px;color:#e6e600;line-height:14px;white-space:nowrap;">5.81 %</div><div style="position:absolute;left:962px;top:378px;font-size:11px;color:#14e07a;line-height:14px;white-space:nowrap;">-5000.00</div><div style="position:absolute;left:1032px;top:378px;font-size:11px;color:#b4b8c4;line-height:14px;white-space:nowrap;">21493.96</div><div style="position:absolute;left:1122px;top:378px;font-size:11px;color:#14e07a;line-height:14px;white-space:nowrap;">-198.32</div><div style="position:absolute;left:1212px;top:378px;font-size:11px;color:#14e07a;line-height:14px;white-space:nowrap;">-2.02 %</div><div style="position:absolute;left:1292px;top:378px;font-size:11px;color:#e6e600;line-height:14px;white-space:nowrap;">36.31</div><div style="position:absolute;left:1382px;top:378px;font-size:11px;color:#e6e600;line-height:14px;white-space:nowrap;">0.16 %</div><div style="position:absolute;left:552px;top:392px;font-size:11px;color:#b4b8c4;line-height:14px;white-space:nowrap;">2022.07</div><div style="position:absolute;left:632px;top:392px;font-size:11px;color:#e6e600;line-height:14px;white-space:nowrap;">52.59</div><div style="position:absolute;left:692px;top:392px;font-size:11px;color:#e6e600;line-height:14px;white-space:nowrap;">1.65</div><div style="position:absolute;left:752px;top:392px;font-size:11px;color:#e6e600;line-height:14px;white-space:nowrap;">1994</div><div style="position:absolute;left:812px;top:392px;font-size:11px;color:#e6e600;line-height:14px;white-space:nowrap;">1100.16</div><div style="position:absolute;left:892px;top:392px;font-size:11px;color:#e6e600;line-height:14px;white-space:nowrap;">4.54 %</div><div style="position:absolute;left:962px;top:392px;font-size:11px;color:#b4b8c4;line-height:14px;white-space:nowrap;">0.00</div><div style="position:absolute;left:1032px;top:392px;font-size:11px;color:#b4b8c4;line-height:14px;white-space:nowrap;">25314.27</div><div style="position:absolute;left:1122px;top:392px;font-size:11px;color:#14e07a;line-height:14px;white-space:nowrap;">-910.66</div><div style="position:absolute;left:1212px;top:392px;font-size:11px;color:#14e07a;line-height:14px;white-space:nowrap;">-3.58 %</div><div style="position:absolute;left:1292px;top:392px;font-size:11px;color:#e6e600;line-height:14px;white-space:nowrap;">11.68</div><div style="position:absolute;left:1382px;top:392px;font-size:11px;color:#e6e600;line-height:14px;white-space:nowrap;">0.05 %</div><div style="position:absolute;left:552px;top:406px;font-size:11px;color:#b4b8c4;line-height:14px;white-space:nowrap;">2022.06</div><div style="position:absolute;left:632px;top:406px;font-size:11px;color:#e6e600;line-height:14px;white-space:nowrap;">31.72</div><div style="position:absolute;left:692px;top:406px;font-size:11px;color:#e6e600;line-height:14px;white-space:nowrap;">0.61</div><div style="position:absolute;left:752px;top:406px;font-size:11px;color:#e6e600;line-height:14px;white-space:nowrap;">1376</div><div style="position:absolute;left:812px;top:406px;font-size:11px;color:#e6e600;line-height:14px;white-space:nowrap;">1779.91</div><div style="position:absolute;left:892px;top:406px;font-size:11px;color:#e6e600;line-height:14px;white-space:nowrap;">7.93 %</div><div style="position:absolute;left:962px;top:406px;font-size:11px;color:#b4b8c4;line-height:14px;white-space:nowrap;">0.00</div><div style="position:absolute;left:1032px;top:406px;font-size:11px;color:#b4b8c4;line-height:14px;white-space:nowrap;">24214.11</div><div style="position:absolute;left:1122px;top:406px;font-size:11px;color:#14e07a;line-height:14px;white-space:nowrap;">-36.04</div><div style="position:absolute;left:1212px;top:406px;font-size:11px;color:#14e07a;line-height:14px;white-space:nowrap;">-0.15 %</div><div style="position:absolute;left:1292px;top:406px;font-size:11px;color:#b4b8c4;line-height:14px;white-space:nowrap;">0</div><div style="position:absolute;left:1382px;top:406px;font-size:11px;color:#b4b8c4;line-height:14px;white-space:nowrap;">0.00 %</div><div style="position:absolute;left:552px;top:420px;font-size:11px;color:#b4b8c4;line-height:14px;white-space:nowrap;">2022.05</div><div style="position:absolute;left:632px;top:420px;font-size:11px;color:#e6e600;line-height:14px;white-space:nowrap;">49.06</div><div style="position:absolute;left:692px;top:420px;font-size:11px;color:#e6e600;line-height:14px;white-space:nowrap;">0.27</div><div style="position:absolute;left:752px;top:420px;font-size:11px;color:#e6e600;line-height:14px;white-space:nowrap;">2247</div><div style="position:absolute;left:812px;top:420px;font-size:11px;color:#e6e600;line-height:14px;white-space:nowrap;">225.63</div><div style="position:absolute;left:892px;top:420px;font-size:11px;color:#e6e600;line-height:14px;white-space:nowrap;">1.02 %</div><div style="position:absolute;left:962px;top:420px;font-size:11px;color:#b4b8c4;line-height:14px;white-space:nowrap;">0.00</div><div style="position:absolute;left:1032px;top:420px;font-size:11px;color:#b4b8c4;line-height:14px;white-space:nowrap;">22434.20</div><div style="position:absolute;left:1122px;top:420px;font-size:11px;color:#14e07a;line-height:14px;white-space:nowrap;">-972.82</div><div style="position:absolute;left:1212px;top:420px;font-size:11px;color:#14e07a;line-height:14px;white-space:nowrap;">-4.26 %</div><div style="position:absolute;left:1292px;top:420px;font-size:11px;color:#e6e600;line-height:14px;white-space:nowrap;">58.24</div><div style="position:absolute;left:1382px;top:420px;font-size:11px;color:#e6e600;line-height:14px;white-space:nowrap;">0.26 %</div><div style="position:absolute;left:552px;top:434px;font-size:11px;color:#b4b8c4;line-height:14px;white-space:nowrap;">2022.04</div><div style="position:absolute;left:632px;top:434px;font-size:11px;color:#e6e600;line-height:14px;white-space:nowrap;">52.60</div><div style="position:absolute;left:692px;top:434px;font-size:11px;color:#e6e600;line-height:14px;white-space:nowrap;">0.32</div><div style="position:absolute;left:752px;top:434px;font-size:11px;color:#e6e600;line-height:14px;white-space:nowrap;">2801</div><div style="position:absolute;left:812px;top:434px;font-size:11px;color:#e6e600;line-height:14px;white-space:nowrap;">3277.00</div><div style="position:absolute;left:892px;top:434px;font-size:11px;color:#e6e600;line-height:14px;white-space:nowrap;">17.31 %</div><div style="position:absolute;left:962px;top:434px;font-size:11px;color:#b4b8c4;line-height:14px;white-space:nowrap;">0.00</div><div style="position:absolute;left:1032px;top:434px;font-size:11px;color:#b4b8c4;line-height:14px;white-space:nowrap;">22208.57</div><div style="position:absolute;left:1122px;top:434px;font-size:11px;color:#14e07a;line-height:14px;white-space:nowrap;">-231.54</div><div style="position:absolute;left:1212px;top:434px;font-size:11px;color:#14e07a;line-height:14px;white-space:nowrap;">-1.05 %</div><div style="position:absolute;left:1292px;top:434px;font-size:11px;color:#e6e600;line-height:14px;white-space:nowrap;">40.39</div><div style="position:absolute;left:1382px;top:434px;font-size:11px;color:#e6e600;line-height:14px;white-space:nowrap;">0.18 %</div><div style="position:absolute;left:552px;top:448px;font-size:11px;color:#b4b8c4;line-height:14px;white-space:nowrap;">2022.03</div><div style="position:absolute;left:632px;top:448px;font-size:11px;color:#e6e600;line-height:14px;white-space:nowrap;">63.73</div><div style="position:absolute;left:692px;top:448px;font-size:11px;color:#e6e600;line-height:14px;white-space:nowrap;">0.95</div><div style="position:absolute;left:752px;top:448px;font-size:11px;color:#e6e600;line-height:14px;white-space:nowrap;">2850</div><div style="position:absolute;left:812px;top:448px;font-size:11px;color:#e6e600;line-height:14px;white-space:nowrap;">838.45</div><div style="position:absolute;left:892px;top:448px;font-size:11px;color:#e6e600;line-height:14px;white-space:nowrap;">4.63 %</div><div style="position:absolute;left:962px;top:448px;font-size:11px;color:#b4b8c4;line-height:14px;white-space:nowrap;">0.00</div><div style="position:absolute;left:1032px;top:448px;font-size:11px;color:#b4b8c4;line-height:14px;white-space:nowrap;">18931.57</div><div style="position:absolute;left:1122px;top:448px;font-size:11px;color:#14e07a;line-height:14px;white-space:nowrap;">-2091.97</div><div style="position:absolute;left:1212px;top:448px;font-size:11px;color:#14e07a;line-height:14px;white-space:nowrap;">-11.28 %</div><div style="position:absolute;left:1292px;top:448px;font-size:11px;color:#e6e600;line-height:14px;white-space:nowrap;">98.44</div><div style="position:absolute;left:1382px;top:448px;font-size:11px;color:#e6e600;line-height:14px;white-space:nowrap;">0.53 %</div><div style="position:absolute;left:552px;top:462px;font-size:11px;color:#b4b8c4;line-height:14px;white-space:nowrap;">2022.02</div><div style="position:absolute;left:632px;top:462px;font-size:11px;color:#e6e600;line-height:14px;white-space:nowrap;">53.25</div><div style="position:absolute;left:692px;top:462px;font-size:11px;color:#e6e600;line-height:14px;white-space:nowrap;">0.61</div><div style="position:absolute;left:752px;top:462px;font-size:11px;color:#e6e600;line-height:14px;white-space:nowrap;">2179</div><div style="position:absolute;left:812px;top:462px;font-size:11px;color:#e6e600;line-height:14px;white-space:nowrap;">784.18</div><div style="position:absolute;left:892px;top:462px;font-size:11px;color:#e6e600;line-height:14px;white-space:nowrap;">4.53 %</div><div style="position:absolute;left:962px;top:462px;font-size:11px;color:#b4b8c4;line-height:14px;white-space:nowrap;">0.00</div><div style="position:absolute;left:1032px;top:462px;font-size:11px;color:#b4b8c4;line-height:14px;white-space:nowrap;">18093.12</div><div style="position:absolute;left:1122px;top:462px;font-size:11px;color:#14e07a;line-height:14px;white-space:nowrap;">-977.43</div><div style="position:absolute;left:1212px;top:462px;font-size:11px;color:#14e07a;line-height:14px;white-space:nowrap;">-5.43 %</div><div style="position:absolute;left:1292px;top:462px;font-size:11px;color:#e6e600;line-height:14px;white-space:nowrap;">13.52</div><div style="position:absolute;left:1382px;top:462px;font-size:11px;color:#e6e600;line-height:14px;white-space:nowrap;">0.07 %</div><div style="position:absolute;left:552px;top:476px;font-size:11px;color:#b4b8c4;line-height:14px;white-space:nowrap;">2022.01</div><div style="position:absolute;left:632px;top:476px;font-size:11px;color:#14e07a;line-height:14px;white-space:nowrap;">24.23</div><div style="position:absolute;left:692px;top:476px;font-size:11px;color:#14e07a;line-height:14px;white-space:nowrap;">0.90</div><div style="position:absolute;left:752px;top:476px;font-size:11px;color:#14e07a;line-height:14px;white-space:nowrap;">827</div><div style="position:absolute;left:812px;top:476px;font-size:11px;color:#14e07a;line-height:14px;white-space:nowrap;">-1970.48</div><div style="position:absolute;left:892px;top:476px;font-size:11px;color:#14e07a;line-height:14px;white-space:nowrap;">-10.22 %</div><div style="position:absolute;left:962px;top:476px;font-size:11px;color:#b4b8c4;line-height:14px;white-space:nowrap;">0.00</div><div style="position:absolute;left:1032px;top:476px;font-size:11px;color:#b4b8c4;line-height:14px;white-space:nowrap;">17308.94</div><div style="position:absolute;left:1122px;top:476px;font-size:11px;color:#14e07a;line-height:14px;white-space:nowrap;">-27.20</div><div style="position:absolute;left:1212px;top:476px;font-size:11px;color:#14e07a;line-height:14px;white-space:nowrap;">-0.16 %</div><div style="position:absolute;left:1292px;top:476px;font-size:11px;color:#e6e600;line-height:14px;white-space:nowrap;">15.84</div><div style="position:absolute;left:1382px;top:476px;font-size:11px;color:#e6e600;line-height:14px;white-space:nowrap;">0.09 %</div><div style="position:absolute;left:552px;top:490px;font-size:11px;color:#b4b8c4;line-height:14px;white-space:nowrap;">2021.12</div><div style="position:absolute;left:632px;top:490px;font-size:11px;color:#e6e600;line-height:14px;white-space:nowrap;">55.99</div><div style="position:absolute;left:692px;top:490px;font-size:11px;color:#e6e600;line-height:14px;white-space:nowrap;">0.79</div><div style="position:absolute;left:752px;top:490px;font-size:11px;color:#e6e600;line-height:14px;white-space:nowrap;">2108</div><div style="position:absolute;left:812px;top:490px;font-size:11px;color:#e6e600;line-height:14px;white-space:nowrap;">136.72</div><div style="position:absolute;left:892px;top:490px;font-size:11px;color:#e6e600;line-height:14px;white-space:nowrap;">0.71 %</div><div style="position:absolute;left:962px;top:490px;font-size:11px;color:#b4b8c4;line-height:14px;white-space:nowrap;">0.00</div><div style="position:absolute;left:1032px;top:490px;font-size:11px;color:#b4b8c4;line-height:14px;white-space:nowrap;">19279.42</div><div style="position:absolute;left:1122px;top:490px;font-size:11px;color:#b4b8c4;line-height:14px;white-space:nowrap;">0.00</div><div style="position:absolute;left:1212px;top:490px;font-size:11px;color:#b4b8c4;line-height:14px;white-space:nowrap;">0.00 %</div><div style="position:absolute;left:1292px;top:490px;font-size:11px;color:#b4b8c4;line-height:14px;white-space:nowrap;">0</div><div style="position:absolute;left:1382px;top:490px;font-size:11px;color:#b4b8c4;line-height:14px;white-space:nowrap;">0.00 %</div><div style="position:absolute;left:552px;top:504px;font-size:11px;color:#b4b8c4;line-height:14px;white-space:nowrap;">2021.11</div><div style="position:absolute;left:632px;top:504px;font-size:11px;color:#e6e600;line-height:14px;white-space:nowrap;">76.63</div><div style="position:absolute;left:692px;top:504px;font-size:11px;color:#e6e600;line-height:14px;white-space:nowrap;">0.38</div><div style="position:absolute;left:752px;top:504px;font-size:11px;color:#e6e600;line-height:14px;white-space:nowrap;">3500</div><div style="position:absolute;left:812px;top:504px;font-size:11px;color:#e6e600;line-height:14px;white-space:nowrap;">4132.11</div><div style="position:absolute;left:892px;top:504px;font-size:11px;color:#e6e600;line-height:14px;white-space:nowrap;">27.53 %</div><div style="position:absolute;left:962px;top:504px;font-size:11px;color:#14e07a;line-height:14px;white-space:nowrap;">-10000.00</div><div style="position:absolute;left:1032px;top:504px;font-size:11px;color:#b4b8c4;line-height:14px;white-space:nowrap;">19142.70</div><div style="position:absolute;left:1122px;top:504px;font-size:11px;color:#b4b8c4;line-height:14px;white-space:nowrap;">0.00</div><div style="position:absolute;left:1212px;top:504px;font-size:11px;color:#b4b8c4;line-height:14px;white-space:nowrap;">0.00 %</div><div style="position:absolute;left:1292px;top:504px;font-size:11px;color:#b4b8c4;line-height:14px;white-space:nowrap;">0</div><div style="position:absolute;left:1382px;top:504px;font-size:11px;color:#b4b8c4;line-height:14px;white-space:nowrap;">0.00 %</div><div style="position:absolute;left:552px;top:518px;font-size:11px;color:#b4b8c4;line-height:14px;white-space:nowrap;">2021.10</div><div style="position:absolute;left:632px;top:518px;font-size:11px;color:#e6e600;line-height:14px;white-space:nowrap;">82.89</div><div style="position:absolute;left:692px;top:518px;font-size:11px;color:#e6e600;line-height:14px;white-space:nowrap;">1.37</div><div style="position:absolute;left:752px;top:518px;font-size:11px;color:#e6e600;line-height:14px;white-space:nowrap;">2905</div><div style="position:absolute;left:812px;top:518px;font-size:11px;color:#e6e600;line-height:14px;white-space:nowrap;">3902.77</div><div style="position:absolute;left:892px;top:518px;font-size:11px;color:#e6e600;line-height:14px;white-space:nowrap;">18.49 %</div><div style="position:absolute;left:962px;top:518px;font-size:11px;color:#b4b8c4;line-height:14px;white-space:nowrap;">0.00</div><div style="position:absolute;left:1032px;top:518px;font-size:11px;color:#b4b8c4;line-height:14px;white-space:nowrap;">25010.59</div><div style="position:absolute;left:1122px;top:518px;font-size:11px;color:#b4b8c4;line-height:14px;white-space:nowrap;">0.00</div><div style="position:absolute;left:1212px;top:518px;font-size:11px;color:#b4b8c4;line-height:14px;white-space:nowrap;">0.00 %</div><div style="position:absolute;left:1292px;top:518px;font-size:11px;color:#b4b8c4;line-height:14px;white-space:nowrap;">0</div><div style="position:absolute;left:1382px;top:518px;font-size:11px;color:#b4b8c4;line-height:14px;white-space:nowrap;">0.00 %</div><div style="position:absolute;left:552px;top:532px;font-size:11px;color:#b4b8c4;line-height:14px;white-space:nowrap;">2021.09</div><div style="position:absolute;left:632px;top:532px;font-size:11px;color:#14e07a;line-height:14px;white-space:nowrap;">86.03</div><div style="position:absolute;left:692px;top:532px;font-size:11px;color:#14e07a;line-height:14px;white-space:nowrap;">1.05</div><div style="position:absolute;left:752px;top:532px;font-size:11px;color:#14e07a;line-height:14px;white-space:nowrap;">2948</div><div style="position:absolute;left:812px;top:532px;font-size:11px;color:#14e07a;line-height:14px;white-space:nowrap;">-141.75</div><div style="position:absolute;left:892px;top:532px;font-size:11px;color:#14e07a;line-height:14px;white-space:nowrap;">-0.67 %</div><div style="position:absolute;left:962px;top:532px;font-size:11px;color:#14e07a;line-height:14px;white-space:nowrap;">-10000.00</div><div style="position:absolute;left:1032px;top:532px;font-size:11px;color:#b4b8c4;line-height:14px;white-space:nowrap;">21107.82</div><div style="position:absolute;left:1122px;top:532px;font-size:11px;color:#b4b8c4;line-height:14px;white-space:nowrap;">0.00</div><div style="position:absolute;left:1212px;top:532px;font-size:11px;color:#b4b8c4;line-height:14px;white-space:nowrap;">0.00 %</div><div style="position:absolute;left:1292px;top:532px;font-size:11px;color:#b4b8c4;line-height:14px;white-space:nowrap;">0</div><div style="position:absolute;left:1382px;top:532px;font-size:11px;color:#b4b8c4;line-height:14px;white-space:nowrap;">0.00 %</div><div style="position:absolute;left:552px;top:546px;font-size:11px;color:#b4b8c4;line-height:14px;white-space:nowrap;">2021.08</div><div style="position:absolute;left:632px;top:546px;font-size:11px;color:#e6e600;line-height:14px;white-space:nowrap;">86.46</div><div style="position:absolute;left:692px;top:546px;font-size:11px;color:#e6e600;line-height:14px;white-space:nowrap;">0.97</div><div style="position:absolute;left:752px;top:546px;font-size:11px;color:#e6e600;line-height:14px;white-space:nowrap;">3395</div><div style="position:absolute;left:812px;top:546px;font-size:11px;color:#e6e600;line-height:14px;white-space:nowrap;">2073.89</div><div style="position:absolute;left:892px;top:546px;font-size:11px;color:#e6e600;line-height:14px;white-space:nowrap;">7.11 %</div><div style="position:absolute;left:962px;top:546px;font-size:11px;color:#b4b8c4;line-height:14px;white-space:nowrap;">0.00</div><div style="position:absolute;left:1032px;top:546px;font-size:11px;color:#b4b8c4;line-height:14px;white-space:nowrap;">31249.57</div><div style="position:absolute;left:1122px;top:546px;font-size:11px;color:#b4b8c4;line-height:14px;white-space:nowrap;">0.00</div><div style="position:absolute;left:1212px;top:546px;font-size:11px;color:#b4b8c4;line-height:14px;white-space:nowrap;">0.00 %</div><div style="position:absolute;left:1292px;top:546px;font-size:11px;color:#b4b8c4;line-height:14px;white-space:nowrap;">0</div><div style="position:absolute;left:1382px;top:546px;font-size:11px;color:#b4b8c4;line-height:14px;white-space:nowrap;">0.00 %</div><div style="position:absolute;left:552px;top:560px;font-size:11px;color:#b4b8c4;line-height:14px;white-space:nowrap;">2021.07</div><div style="position:absolute;left:632px;top:560px;font-size:11px;color:#e6e600;line-height:14px;white-space:nowrap;">55.29</div><div style="position:absolute;left:692px;top:560px;font-size:11px;color:#e6e600;line-height:14px;white-space:nowrap;">0.38</div><div style="position:absolute;left:752px;top:560px;font-size:11px;color:#e6e600;line-height:14px;white-space:nowrap;">2852</div><div style="position:absolute;left:812px;top:560px;font-size:11px;color:#e6e600;line-height:14px;white-space:nowrap;">3733.53</div><div style="position:absolute;left:892px;top:560px;font-size:11px;color:#e6e600;line-height:14px;white-space:nowrap;">14.67 %</div><div style="position:absolute;left:962px;top:560px;font-size:11px;color:#b4b8c4;line-height:14px;white-space:nowrap;">0.00</div><div style="position:absolute;left:1032px;top:560px;font-size:11px;color:#b4b8c4;line-height:14px;white-space:nowrap;">29175.68</div><div style="position:absolute;left:1122px;top:560px;font-size:11px;color:#b4b8c4;line-height:14px;white-space:nowrap;">0.00</div><div style="position:absolute;left:1212px;top:560px;font-size:11px;color:#b4b8c4;line-height:14px;white-space:nowrap;">0.00 %</div><div style="position:absolute;left:1292px;top:560px;font-size:11px;color:#b4b8c4;line-height:14px;white-space:nowrap;">0</div><div style="position:absolute;left:1382px;top:560px;font-size:11px;color:#b4b8c4;line-height:14px;white-space:nowrap;">0.00 %</div><div style="position:absolute;left:552px;top:574px;font-size:11px;color:#b4b8c4;line-height:14px;white-space:nowrap;">2021.06</div><div style="position:absolute;left:632px;top:574px;font-size:11px;color:#14e07a;line-height:14px;white-space:nowrap;">90.28</div><div style="position:absolute;left:692px;top:574px;font-size:11px;color:#14e07a;line-height:14px;white-space:nowrap;">0.88</div><div style="position:absolute;left:752px;top:574px;font-size:11px;color:#14e07a;line-height:14px;white-space:nowrap;">3397</div><div style="position:absolute;left:812px;top:574px;font-size:11px;color:#14e07a;line-height:14px;white-space:nowrap;">-5625.93</div><div style="position:absolute;left:892px;top:574px;font-size:11px;color:#14e07a;line-height:14px;white-space:nowrap;">-18.11 %</div><div style="position:absolute;left:962px;top:574px;font-size:11px;color:#b4b8c4;line-height:14px;white-space:nowrap;">0.00</div><div style="position:absolute;left:1032px;top:574px;font-size:11px;color:#b4b8c4;line-height:14px;white-space:nowrap;">25442.15</div><div style="position:absolute;left:1122px;top:574px;font-size:11px;color:#b4b8c4;line-height:14px;white-space:nowrap;">0.00</div><div style="position:absolute;left:1212px;top:574px;font-size:11px;color:#b4b8c4;line-height:14px;white-space:nowrap;">0.00 %</div><div style="position:absolute;left:1292px;top:574px;font-size:11px;color:#b4b8c4;line-height:14px;white-space:nowrap;">0</div><div style="position:absolute;left:1382px;top:574px;font-size:11px;color:#b4b8c4;line-height:14px;white-space:nowrap;">0.00 %</div><div style="position:absolute;left:552px;top:588px;font-size:11px;color:#b4b8c4;line-height:14px;white-space:nowrap;">2021.05</div><div style="position:absolute;left:632px;top:588px;font-size:11px;color:#e6e600;line-height:14px;white-space:nowrap;">123.80</div><div style="position:absolute;left:692px;top:588px;font-size:11px;color:#e6e600;line-height:14px;white-space:nowrap;">2.77</div><div style="position:absolute;left:752px;top:588px;font-size:11px;color:#e6e600;line-height:14px;white-space:nowrap;">3540</div><div style="position:absolute;left:812px;top:588px;font-size:11px;color:#e6e600;line-height:14px;white-space:nowrap;">6444.11</div><div style="position:absolute;left:892px;top:588px;font-size:11px;color:#e6e600;line-height:14px;white-space:nowrap;">26.17 %</div><div style="position:absolute;left:962px;top:588px;font-size:11px;color:#14e07a;line-height:14px;white-space:nowrap;">-2000.00</div><div style="position:absolute;left:1032px;top:588px;font-size:11px;color:#b4b8c4;line-height:14px;white-space:nowrap;">31068.08</div><div style="position:absolute;left:1122px;top:588px;font-size:11px;color:#b4b8c4;line-height:14px;white-space:nowrap;">0.00</div><div style="position:absolute;left:1212px;top:588px;font-size:11px;color:#b4b8c4;line-height:14px;white-space:nowrap;">0.00 %</div><div style="position:absolute;left:1292px;top:588px;font-size:11px;color:#b4b8c4;line-height:14px;white-space:nowrap;">0</div><div style="position:absolute;left:1382px;top:588px;font-size:11px;color:#b4b8c4;line-height:14px;white-space:nowrap;">0.00 %</div><div style="position:absolute;left:552px;top:602px;font-size:11px;color:#b4b8c4;line-height:14px;white-space:nowrap;">2021.04</div><div style="position:absolute;left:632px;top:602px;font-size:11px;color:#e6e600;line-height:14px;white-space:nowrap;">96.45</div><div style="position:absolute;left:692px;top:602px;font-size:11px;color:#e6e600;line-height:14px;white-space:nowrap;">1.37</div><div style="position:absolute;left:752px;top:602px;font-size:11px;color:#e6e600;line-height:14px;white-space:nowrap;">2933</div><div style="position:absolute;left:812px;top:602px;font-size:11px;color:#e6e600;line-height:14px;white-space:nowrap;">6623.97</div><div style="position:absolute;left:892px;top:602px;font-size:11px;color:#e6e600;line-height:14px;white-space:nowrap;">33.12 %</div><div style="position:absolute;left:962px;top:602px;font-size:11px;color:#e6e600;line-height:14px;white-space:nowrap;">20000.00</div><div style="position:absolute;left:1032px;top:602px;font-size:11px;color:#b4b8c4;line-height:14px;white-space:nowrap;">26623.97</div><div style="position:absolute;left:1122px;top:602px;font-size:11px;color:#b4b8c4;line-height:14px;white-space:nowrap;">0.00</div><div style="position:absolute;left:1212px;top:602px;font-size:11px;color:#b4b8c4;line-height:14px;white-space:nowrap;">0.00 %</div><div style="position:absolute;left:1292px;top:602px;font-size:11px;color:#b4b8c4;line-height:14px;white-space:nowrap;">0</div><div style="position:absolute;left:1382px;top:602px;font-size:11px;color:#b4b8c4;line-height:14px;white-space:nowrap;">0.00 %</div><div style="position:absolute;left:547px;top:616px;width:929px;height:15px;background:#1b1b1b;"></div><div style="position:absolute;left:552px;top:617px;font-size:12px;color:#c8c8c8;line-height:14px;">合计</div><div style="position:absolute;left:632px;top:617px;font-size:11px;color:#e6e600;line-height:14px;white-space:nowrap;">1482.28</div><div style="position:absolute;left:812px;top:617px;font-size:11px;color:#e6e600;line-height:14px;white-space:nowrap;">36862.54</div><div style="position:absolute;left:892px;top:617px;font-size:11px;color:#e6e600;line-height:14px;white-space:nowrap;">182.92 %</div><div style="position:absolute;left:962px;top:617px;font-size:11px;color:#14e07a;line-height:14px;white-space:nowrap;">-10000.00</div><div style="position:absolute;left:1122px;top:617px;font-size:11px;color:#14e07a;line-height:14px;white-space:nowrap;">-2091.97</div><div style="position:absolute;left:1212px;top:617px;font-size:11px;color:#14e07a;line-height:14px;white-space:nowrap;">-11.28 %</div><div style="position:absolute;left:1292px;top:617px;font-size:11px;color:#e6e600;line-height:14px;white-space:nowrap;">118.57</div><div style="position:absolute;left:1382px;top:617px;font-size:11px;color:#e6e600;line-height:14px;white-space:nowrap;">0.53 %</div><div style="position:absolute;left:246px;top:699px;width:1665px;height:1px;background:#fff;"></div><div style="position:absolute;left:247px;top:701px;width:1664px;height:1px;background:#000;"></div><div style="position:absolute;left:248px;top:702px;width:1663px;height:18px;background:#f0f0f0;"></div><div style="position:absolute;left:247px;top:702px;width:1px;height:19px;background:#555;"></div><div style="position:absolute;left:8px;top:721px;width:1903px;height:3px;background:#f0f0f0;"></div><div style="position:absolute;left:10px;top:720px;width:237px;height:1px;background:#a8a8a8;"></div><div style="position:absolute;left:263px;top:703px;font-size:12px;color:#6a6a78;white-space:nowrap;">GBPUSD,M30</div><div style="position:absolute;left:364px;top:703px;font-size:12px;color:#6a6a78;white-space:nowrap;">AUDUSD,M30</div><div style="position:absolute;left:467px;top:703px;font-size:12px;color:#6a6a78;white-space:nowrap;">USDJPY,M30</div><div style="position:absolute;left:563px;top:703px;font-size:12px;color:#6a6a78;white-space:nowrap;">XAUUSD.s,H1</div><div style="position:absolute;left:664px;top:703px;font-size:12px;color:#6a6a78;white-space:nowrap;">USDNOK,H1</div><div style="position:absolute;left:759px;top:703px;font-size:12px;color:#6a6a78;white-space:nowrap;">USDCHF,M30</div><div style="position:absolute;left:860px;top:703px;font-size:12px;color:#6a6a78;white-space:nowrap;">EURUSDc,M30</div><div style="position:absolute;left:967px;top:703px;font-size:12px;color:#6a6a78;white-space:nowrap;">EURUSDc,H1</div><div style="position:absolute;left:1063px;top:703px;font-size:12px;color:#6a6a78;white-space:nowrap;">XAUUSD,H1</div><div style="position:absolute;left:1155px;top:703px;font-size:12px;color:#6a6a78;white-space:nowrap;">USDJPY,H1</div><div style="position:absolute;left:1239px;top:703px;font-size:12px;color:#6a6a78;white-space:nowrap;">XAUUSDx,H1</div><div style="position:absolute;left:1335px;top:703px;font-size:12px;color:#6a6a78;white-space:nowrap;">XAUUSD,H1</div><div style="position:absolute;left:1427px;top:703px;font-size:12px;color:#6a6a78;white-space:nowrap;">XAUUSD,H1</div><div style="position:absolute;left:1518px;top:703px;font-size:12px;color:#6a6a78;white-space:nowrap;">XAUUSDx,H1</div><div style="position:absolute;left:1615px;top:703px;font-size:12px;color:#6a6a78;white-space:nowrap;">XAUUSD,H1</div><div style="position:absolute;left:1706px;top:703px;font-size:12px;color:#6a6a78;white-space:nowrap;">XAUUSDx,H1</div><div style="position:absolute;left:1803px;top:703px;font-size:12px;color:#6a6a78;white-space:nowrap;">XAUUSD,H1</div><div style="position:absolute;left:352px;top:705px;width:1px;height:14px;background:#555;"></div><div style="position:absolute;left:456px;top:705px;width:1px;height:14px;background:#555;"></div><div style="position:absolute;left:552px;top:705px;width:1px;height:14px;background:#555;"></div><div style="position:absolute;left:652px;top:705px;width:1px;height:14px;background:#555;"></div><div style="position:absolute;left:748px;top:705px;width:1px;height:14px;background:#555;"></div><div style="position:absolute;left:849px;top:705px;width:1px;height:14px;background:#555;"></div><div style="position:absolute;left:956px;top:705px;width:1px;height:14px;background:#555;"></div><div style="position:absolute;left:1052px;top:705px;width:1px;height:14px;background:#555;"></div><div style="position:absolute;left:1144px;top:705px;width:1px;height:14px;background:#555;"></div><div style="position:absolute;left:1228px;top:705px;width:1px;height:14px;background:#555;"></div><div style="position:absolute;left:1324px;top:705px;width:1px;height:14px;background:#555;"></div><div style="position:absolute;left:1416px;top:705px;width:1px;height:14px;background:#555;"></div><div style="position:absolute;left:1508px;top:705px;width:1px;height:14px;background:#555;"></div><div style="position:absolute;left:1604px;top:705px;width:1px;height:14px;background:#555;"></div><div style="position:absolute;left:1696px;top:705px;width:1px;height:14px;background:#555;"></div><div style="position:absolute;left:1792px;top:705px;width:1px;height:14px;background:#555;"></div><svg style="position:absolute;left:1877px;top:706px" width="6" height="9" viewBox="0 0 6 9"><path d="M5 0v9L0 4.5z" fill="#aaa"/></svg><svg style="position:absolute;left:1897px;top:706px" width="6" height="9" viewBox="0 0 6 9"><path d="M0 0v9l5-4.5z" fill="#000"/></svg><div style="position:absolute;left:8px;top:725px;width:1903px;height:1px;background:#a0a0a0;"></div><div style="position:absolute;left:9px;top:726px;width:14px;height:304px;background:#f0f0f0;"></div><div style="position:absolute;left:9px;top:739px;width:14px;height:285px;background:#c8d6e6;"></div><div style="position:absolute;left:11px;top:723px;font-size:12.5px;color:#000;font-weight:bold;">×</div><div style="position:absolute;left:23px;top:726px;width:1px;height:278px;background:#a0a0a0;"></div><div style="position:absolute;left:24px;top:726px;width:1884px;height:276px;background:#fff;"></div><div style="position:absolute;left:24px;top:726px;width:1884px;height:1px;background:#a0a0a0;"></div><div style="position:absolute;left:24px;top:727px;width:1882px;height:22px;background:linear-gradient(180deg,#fff 0%,#fff 35%,#f3f4f6 36%,#eef0f3 100%);border-bottom:1px solid #d5d5d5;"></div><div style="position:absolute;left:225px;top:729px;width:1px;height:19px;background:#e2e2e2;"></div><div style="position:absolute;left:505px;top:729px;width:1px;height:19px;background:#e2e2e2;"></div><div style="position:absolute;left:646px;top:729px;width:1px;height:19px;background:#e2e2e2;"></div><div style="position:absolute;left:753px;top:729px;width:1px;height:19px;background:#e2e2e2;"></div><div style="position:absolute;left:893px;top:729px;width:1px;height:19px;background:#e2e2e2;"></div><div style="position:absolute;left:1048px;top:729px;width:1px;height:19px;background:#e2e2e2;"></div><div style="position:absolute;left:1203px;top:729px;width:1px;height:19px;background:#e2e2e2;"></div><div style="position:absolute;left:1358px;top:729px;width:1px;height:19px;background:#e2e2e2;"></div><div style="position:absolute;left:1513px;top:729px;width:1px;height:19px;background:#e2e2e2;"></div><div style="position:absolute;left:1668px;top:729px;width:1px;height:19px;background:#e2e2e2;"></div><div style="position:absolute;left:1905px;top:729px;width:1px;height:19px;background:#e2e2e2;"></div><div style="position:absolute;left:30px;top:730px;font-size:12px;color:#000;">订单</div><div style="position:absolute;left:66px;top:731px;font-size:9px;color:#999;">⁄△</div><div style="position:absolute;right:1419px;top:730px;font-size:12px;color:#000;text-align:right;">时间</div><div style="position:absolute;right:1279px;top:730px;font-size:12px;color:#000;text-align:right;">类型</div><div style="position:absolute;right:1171px;top:730px;font-size:12px;color:#000;text-align:right;">手数</div><div style="position:absolute;right:1031px;top:730px;font-size:12px;color:#000;text-align:right;">交易品种</div><div style="position:absolute;right:876px;top:730px;font-size:12px;color:#000;text-align:right;">价格</div><div style="position:absolute;right:721px;top:730px;font-size:12px;color:#000;text-align:right;">止损</div><div style="position:absolute;right:566px;top:730px;font-size:12px;color:#000;text-align:right;">止盈</div><div style="position:absolute;right:411px;top:730px;font-size:12px;color:#000;text-align:right;">价格</div><div style="position:absolute;right:256px;top:730px;font-size:12px;color:#000;text-align:right;">库存费</div><div style="position:absolute;right:19px;top:730px;font-size:12px;color:#000;text-align:right;">获利</div><div style="position:absolute;left:24px;top:750px;width:1882px;height:21px;background:#3399ff;"></div><svg style="position:absolute;left:27px;top:753px" width="14" height="15" viewBox="0 0 14 15"><path d="M1.5 0.5h7l3 3v10h-10z" fill="#fafafa" stroke="#666"/><path d="M8.5 0.5v3h3" fill="none" stroke="#666"/><circle cx="10" cy="11" r="3.3" fill="#2a8ae8" stroke="#fff" stroke-width=".8"/></svg><div style="position:absolute;left:46px;top:753px;font-size:12.4px;color:#fff;">28689808</div><div style="position:absolute;right:1417px;top:753px;font-size:12.4px;color:#fff;text-align:right;">2023.02.27 08:12:10</div><div style="position:absolute;right:1278px;top:753px;font-size:12.4px;color:#fff;text-align:right;">buy</div><div style="position:absolute;right:1170px;top:753px;font-size:12.4px;color:#fff;text-align:right;">0.01</div><div style="position:absolute;right:1030px;top:753px;font-size:12.4px;color:#fff;text-align:right;">xauusd</div><div style="position:absolute;right:874px;top:753px;font-size:12.4px;color:#fff;text-align:right;">1811.41</div><div style="position:absolute;right:720px;top:753px;font-size:12.4px;color:#fff;text-align:right;">0.00</div><div style="position:absolute;right:565px;top:753px;font-size:12.4px;color:#fff;text-align:right;">1810.32</div><div style="position:absolute;right:409px;top:753px;font-size:12.4px;color:#fff;text-align:right;">1808.16</div><div style="position:absolute;right:255px;top:753px;font-size:12.4px;color:#fff;text-align:right;">0.00</div><div style="position:absolute;right:17px;top:753px;font-size:12.4px;color:#fff;text-align:right;">-3.25</div><div style="position:absolute;left:24px;top:771px;width:1882px;height:21px;background:#ebebeb;"></div><svg style="position:absolute;left:27px;top:774px" width="14" height="15" viewBox="0 0 14 15"><path d="M1.5 0.5h7l3 3v10h-10z" fill="#fafafa" stroke="#666"/><path d="M8.5 0.5v3h3" fill="none" stroke="#666"/><circle cx="10" cy="11" r="3.3" fill="#2a8ae8" stroke="#fff" stroke-width=".8"/></svg><div style="position:absolute;left:46px;top:774px;font-size:12.4px;color:#000;">28690863</div><div style="position:absolute;right:1417px;top:774px;font-size:12.4px;color:#000;text-align:right;">2023.02.27 08:14:27</div><div style="position:absolute;right:1278px;top:774px;font-size:12.4px;color:#000;text-align:right;">buy</div><div style="position:absolute;right:1170px;top:774px;font-size:12.4px;color:#000;text-align:right;">0.01</div><div style="position:absolute;right:1030px;top:774px;font-size:12.4px;color:#000;text-align:right;">xauusd</div><div style="position:absolute;right:874px;top:774px;font-size:12.4px;color:#000;text-align:right;">1810.57</div><div style="position:absolute;right:720px;top:774px;font-size:12.4px;color:#000;text-align:right;">0.00</div><div style="position:absolute;right:565px;top:774px;font-size:12.4px;color:#000;text-align:right;">1810.32</div><div style="position:absolute;right:409px;top:774px;font-size:12.4px;color:#000;text-align:right;">1808.16</div><div style="position:absolute;right:255px;top:774px;font-size:12.4px;color:#000;text-align:right;">0.00</div><div style="position:absolute;right:17px;top:774px;font-size:12.4px;color:#000;text-align:right;">-2.41</div><div style="position:absolute;left:24px;top:792px;width:1882px;height:21px;background:#fff;"></div><svg style="position:absolute;left:27px;top:795px" width="14" height="15" viewBox="0 0 14 15"><path d="M1.5 0.5h7l3 3v10h-10z" fill="#fafafa" stroke="#666"/><path d="M8.5 0.5v3h3" fill="none" stroke="#666"/><circle cx="10" cy="11" r="3.3" fill="#2a8ae8" stroke="#fff" stroke-width=".8"/></svg><div style="position:absolute;left:46px;top:795px;font-size:12.4px;color:#000;">28691039</div><div style="position:absolute;right:1417px;top:795px;font-size:12.4px;color:#000;text-align:right;">2023.02.27 08:15:00</div><div style="position:absolute;right:1278px;top:795px;font-size:12.4px;color:#000;text-align:right;">buy</div><div style="position:absolute;right:1170px;top:795px;font-size:12.4px;color:#000;text-align:right;">0.01</div><div style="position:absolute;right:1030px;top:795px;font-size:12.4px;color:#000;text-align:right;">xauusd</div><div style="position:absolute;right:874px;top:795px;font-size:12.4px;color:#000;text-align:right;">1809.72</div><div style="position:absolute;right:720px;top:795px;font-size:12.4px;color:#000;text-align:right;">0.00</div><div style="position:absolute;right:565px;top:795px;font-size:12.4px;color:#000;text-align:right;">1810.32</div><div style="position:absolute;right:409px;top:795px;font-size:12.4px;color:#000;text-align:right;">1808.16</div><div style="position:absolute;right:255px;top:795px;font-size:12.4px;color:#000;text-align:right;">0.00</div><div style="position:absolute;right:17px;top:795px;font-size:12.4px;color:#000;text-align:right;">-1.56</div><div style="position:absolute;left:24px;top:813px;width:1882px;height:21px;background:#ebebeb;"></div><svg style="position:absolute;left:27px;top:816px" width="14" height="15" viewBox="0 0 14 15"><path d="M1.5 0.5h7l3 3v10h-10z" fill="#fafafa" stroke="#666"/><path d="M8.5 0.5v3h3" fill="none" stroke="#666"/><circle cx="10" cy="11" r="3.3" fill="#2a8ae8" stroke="#fff" stroke-width=".8"/></svg><div style="position:absolute;left:46px;top:816px;font-size:12.4px;color:#000;">28693631</div><div style="position:absolute;right:1417px;top:816px;font-size:12.4px;color:#000;text-align:right;">2023.02.27 08:32:49</div><div style="position:absolute;right:1278px;top:816px;font-size:12.4px;color:#000;text-align:right;">buy</div><div style="position:absolute;right:1170px;top:816px;font-size:12.4px;color:#000;text-align:right;">0.02</div><div style="position:absolute;right:1030px;top:816px;font-size:12.4px;color:#000;text-align:right;">xauusd</div><div style="position:absolute;right:874px;top:816px;font-size:12.4px;color:#000;text-align:right;">1808.82</div><div style="position:absolute;right:720px;top:816px;font-size:12.4px;color:#000;text-align:right;">0.00</div><div style="position:absolute;right:565px;top:816px;font-size:12.4px;color:#000;text-align:right;">1810.32</div><div style="position:absolute;right:409px;top:816px;font-size:12.4px;color:#000;text-align:right;">1808.16</div><div style="position:absolute;right:255px;top:816px;font-size:12.4px;color:#000;text-align:right;">0.00</div><div style="position:absolute;right:17px;top:816px;font-size:12.4px;color:#000;text-align:right;">-1.32</div><div style="position:absolute;left:24px;top:834px;width:1882px;height:21px;background:#fff;"></div><svg style="position:absolute;left:27px;top:837px" width="14" height="15" viewBox="0 0 14 15"><path d="M1.5 0.5h7l3 3v10h-10z" fill="#fafafa" stroke="#666"/><path d="M8.5 0.5v3h3" fill="none" stroke="#666"/><circle cx="10" cy="11" r="3.3" fill="#2a8ae8" stroke="#fff" stroke-width=".8"/></svg><div style="position:absolute;left:46px;top:837px;font-size:12.4px;color:#000;">28694970</div><div style="position:absolute;right:1417px;top:837px;font-size:12.4px;color:#000;text-align:right;">2023.02.27 08:41:18</div><div style="position:absolute;right:1278px;top:837px;font-size:12.4px;color:#000;text-align:right;">buy</div><div style="position:absolute;right:1170px;top:837px;font-size:12.4px;color:#000;text-align:right;">0.02</div><div style="position:absolute;right:1030px;top:837px;font-size:12.4px;color:#000;text-align:right;">xauusd</div><div style="position:absolute;right:874px;top:837px;font-size:12.4px;color:#000;text-align:right;">1807.95</div><div style="position:absolute;right:720px;top:837px;font-size:12.4px;color:#000;text-align:right;">0.00</div><div style="position:absolute;right:565px;top:837px;font-size:12.4px;color:#000;text-align:right;">1810.32</div><div style="position:absolute;right:409px;top:837px;font-size:12.4px;color:#000;text-align:right;">1808.16</div><div style="position:absolute;right:255px;top:837px;font-size:12.4px;color:#000;text-align:right;">0.00</div><div style="position:absolute;right:17px;top:837px;font-size:12.4px;color:#000;text-align:right;">0.42</div><div style="position:absolute;left:24px;top:855px;width:1882px;height:21px;background:#ebebeb;"></div><svg style="position:absolute;left:27px;top:858px" width="14" height="15" viewBox="0 0 14 15"><path d="M1.5 0.5h7l3 3v10h-10z" fill="#fafafa" stroke="#666"/><path d="M8.5 0.5v3h3" fill="none" stroke="#666"/><circle cx="10" cy="11" r="3.3" fill="#e84a1a" stroke="#fff" stroke-width=".8"/></svg><div style="position:absolute;left:46px;top:858px;font-size:12.4px;color:#000;">28697214</div><div style="position:absolute;right:1417px;top:858px;font-size:12.4px;color:#000;text-align:right;">2023.02.27 09:04:27</div><div style="position:absolute;right:1278px;top:858px;font-size:12.4px;color:#000;text-align:right;">sell</div><div style="position:absolute;right:1170px;top:858px;font-size:12.4px;color:#000;text-align:right;">0.01</div><div style="position:absolute;right:1030px;top:858px;font-size:12.4px;color:#000;text-align:right;">xauusd</div><div style="position:absolute;right:874px;top:858px;font-size:12.4px;color:#000;text-align:right;">1807.06</div><div style="position:absolute;right:720px;top:858px;font-size:12.4px;color:#000;text-align:right;">0.00</div><div style="position:absolute;right:565px;top:858px;font-size:12.4px;color:#000;text-align:right;">1806.52</div><div style="position:absolute;right:409px;top:858px;font-size:12.4px;color:#000;text-align:right;">1808.49</div><div style="position:absolute;right:255px;top:858px;font-size:12.4px;color:#000;text-align:right;">0.00</div><div style="position:absolute;right:17px;top:858px;font-size:12.4px;color:#000;text-align:right;">-1.43</div><div style="position:absolute;left:24px;top:876px;width:1882px;height:21px;background:#fff;"></div><svg style="position:absolute;left:27px;top:879px" width="14" height="15" viewBox="0 0 14 15"><path d="M1.5 0.5h7l3 3v10h-10z" fill="#fafafa" stroke="#666"/><path d="M8.5 0.5v3h3" fill="none" stroke="#666"/><circle cx="10" cy="11" r="3.3" fill="#e84a1a" stroke="#fff" stroke-width=".8"/></svg><div style="position:absolute;left:46px;top:879px;font-size:12.4px;color:#000;">28698006</div><div style="position:absolute;right:1417px;top:879px;font-size:12.4px;color:#000;text-align:right;">2023.02.27 09:06:26</div><div style="position:absolute;right:1278px;top:879px;font-size:12.4px;color:#000;text-align:right;">sell</div><div style="position:absolute;right:1170px;top:879px;font-size:12.4px;color:#000;text-align:right;">0.01</div><div style="position:absolute;right:1030px;top:879px;font-size:12.4px;color:#000;text-align:right;">xauusd</div><div style="position:absolute;right:874px;top:879px;font-size:12.4px;color:#000;text-align:right;">1807.97</div><div style="position:absolute;right:720px;top:879px;font-size:12.4px;color:#000;text-align:right;">0.00</div><div style="position:absolute;right:565px;top:879px;font-size:12.4px;color:#000;text-align:right;">1806.52</div><div style="position:absolute;right:409px;top:879px;font-size:12.4px;color:#000;text-align:right;">1808.49</div><div style="position:absolute;right:255px;top:879px;font-size:12.4px;color:#000;text-align:right;">0.00</div><div style="position:absolute;right:17px;top:879px;font-size:12.4px;color:#000;text-align:right;">-0.52</div><div style="position:absolute;left:24px;top:897px;width:1882px;height:21px;background:#c8c8c8;"></div><svg style="position:absolute;left:27px;top:900px" width="14" height="15" viewBox="0 0 14 15"><rect x="0.5" y="0.5" width="12" height="13" fill="#fafafa" stroke="#777"/><path d="M6.5 11l3.5-3.5H8V3H5v4.5H3z" fill="#e83a1a"/></svg><div style="position:absolute;left:46px;top:900px;font-size:12px;color:#000;font-weight:bold;white-space:nowrap;">余额: 26 872.61 USD</div><div style="position:absolute;left:170px;top:900px;font-size:12px;color:#000;font-weight:bold;white-space:nowrap;">净值: 26 862.54</div><div style="position:absolute;left:266px;top:900px;font-size:12px;color:#000;font-weight:bold;white-space:nowrap;">已用预付款: 24.87</div><div style="position:absolute;left:372px;top:900px;font-size:12px;color:#000;font-weight:bold;white-space:nowrap;">可用预付款: 26 837.67</div><div style="position:absolute;left:503px;top:900px;font-size:12px;color:#000;font-weight:bold;white-space:nowrap;">预付款比例: 108000.38%</div><div style="position:absolute;right:17px;top:900px;font-size:12.4px;color:#000;text-align:right;font-weight:bold;">-10.07</div><div style="position:absolute;left:1906px;top:726px;width:2px;height:276px;background:#f0f0f0;"></div><div style="position:absolute;left:24px;top:1002px;width:1884px;height:26px;background:#f0f0f0;"></div><div style="position:absolute;left:70px;top:1002px;width:1838px;height:1px;background:#000;"></div><div style="position:absolute;left:26px;top:1002px;width:44px;height:22px;background:#fff;border:1px solid #000;border-top:none;box-sizing:border-box;border-width:0 2px 2px 1px;"></div><div style="position:absolute;left:24px;top:1002px;width:1px;height:26px;background:#a0a0a0;"></div><div style="position:absolute;left:35px;top:1004px;font-size:12px;color:#000;white-space:nowrap;">交易</div><div style="position:absolute;left:80px;top:1004px;font-size:12px;color:#777;white-space:nowrap;">展示</div><div style="position:absolute;left:124px;top:1004px;font-size:12px;color:#777;white-space:nowrap;">账户历史</div><div style="position:absolute;left:192px;top:1004px;font-size:12px;color:#777;white-space:nowrap;">新闻</div><div style="position:absolute;left:250px;top:1004px;font-size:12px;color:#777;white-space:nowrap;">警报</div><div style="position:absolute;left:294px;top:1004px;font-size:12px;color:#777;white-space:nowrap;">邮箱</div><div style="position:absolute;left:346px;top:1004px;font-size:12px;color:#777;white-space:nowrap;">公司</div><div style="position:absolute;left:390px;top:1004px;font-size:12px;color:#777;white-space:nowrap;">市场</div><div style="position:absolute;left:434px;top:1004px;font-size:12px;color:#777;white-space:nowrap;">信号</div><div style="position:absolute;left:478px;top:1004px;font-size:12px;color:#777;white-space:nowrap;">文章</div><div style="position:absolute;left:530px;top:1004px;font-size:12px;color:#777;white-space:nowrap;">代码库</div><div style="position:absolute;left:586px;top:1004px;font-size:12px;color:#777;white-space:nowrap;">EA</div><div style="position:absolute;left:622px;top:1004px;font-size:12px;color:#777;white-space:nowrap;">日志</div><div style="position:absolute;left:218px;top:1010px;font-size:9px;color:#e01010;font-weight:bold;">63</div><div style="position:absolute;left:320px;top:1010px;font-size:9px;color:#e01010;font-weight:bold;">6</div><div style="position:absolute;left:504px;top:1010px;font-size:9px;color:#e01010;font-weight:bold;">1</div><div style="position:absolute;left:114px;top:1006px;width:1px;height:15px;background:#555;"></div><div style="position:absolute;left:182px;top:1006px;width:1px;height:15px;background:#555;"></div><div style="position:absolute;left:240px;top:1006px;width:1px;height:15px;background:#555;"></div><div style="position:absolute;left:284px;top:1006px;width:1px;height:15px;background:#555;"></div><div style="position:absolute;left:336px;top:1006px;width:1px;height:15px;background:#555;"></div><div style="position:absolute;left:380px;top:1006px;width:1px;height:15px;background:#555;"></div><div style="position:absolute;left:424px;top:1006px;width:1px;height:15px;background:#555;"></div><div style="position:absolute;left:468px;top:1006px;width:1px;height:15px;background:#555;"></div><div style="position:absolute;left:520px;top:1006px;width:1px;height:15px;background:#555;"></div><div style="position:absolute;left:576px;top:1006px;width:1px;height:15px;background:#555;"></div><div style="position:absolute;left:611px;top:1006px;width:1px;height:15px;background:#555;"></div><div style="position:absolute;left:655px;top:1006px;width:1px;height:15px;background:#555;"></div><div style="position:absolute;left:8px;top:1028px;width:1903px;height:1px;background:#a0a0a0;"></div><div style="position:absolute;left:10px;top:1001px;width:12px;height:24px;overflow:hidden;"><div style="position:absolute;left:-6px;top:6px;width:24px;font-size:11px;line-height:12px;color:#333;transform:rotate(-90deg);">终端</div></div></body></html>
